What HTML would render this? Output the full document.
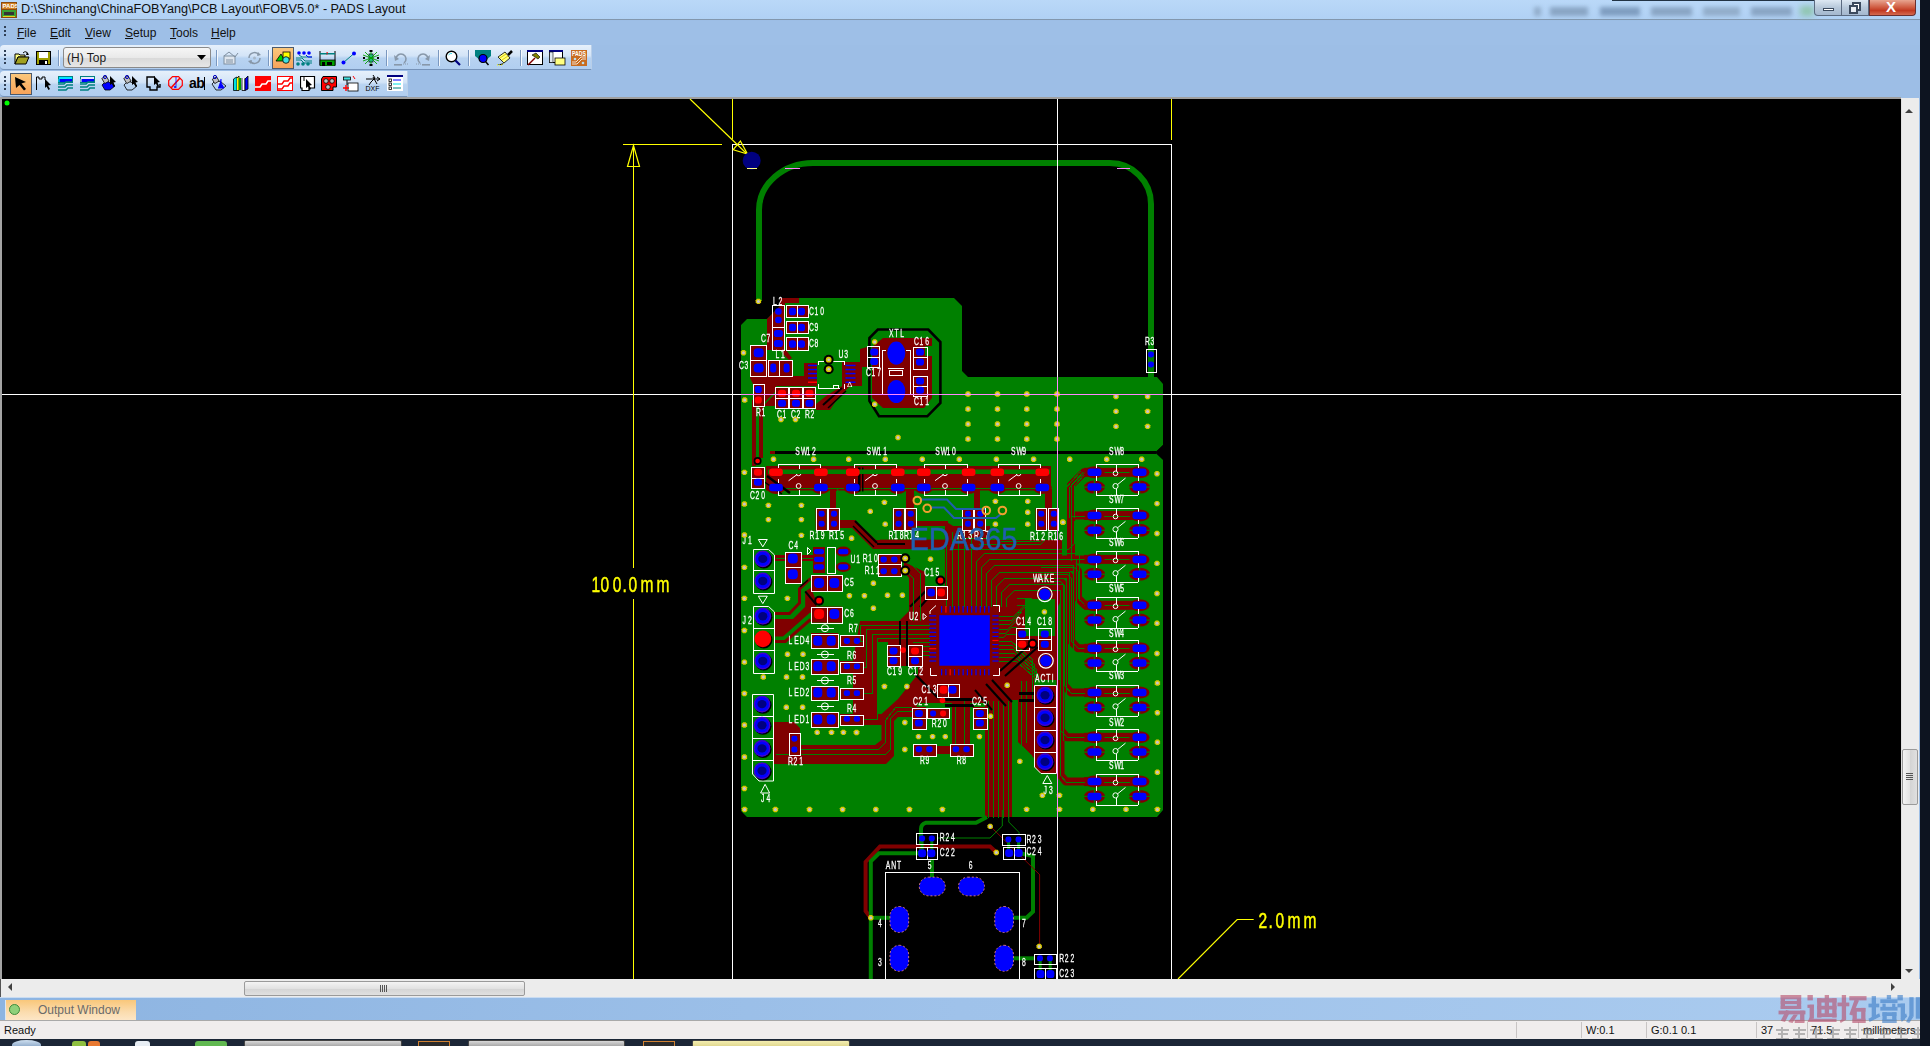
<!DOCTYPE html><html><head><meta charset="utf-8"><title>PADS Layout</title><style>
*{margin:0;padding:0;box-sizing:border-box}
html,body{width:1930px;height:1046px;overflow:hidden;background:#0d1622;font-family:"Liberation Sans",sans-serif}
.abs{position:absolute}
#win{position:absolute;left:0;top:0;width:1920px;height:1039px;background:#9dbee6;overflow:hidden}
#title{position:absolute;left:0;top:0;width:1920px;height:20px;background:linear-gradient(#bad8f8,#b0d1f4);border-bottom:1px solid #8297ad}
#title .t{position:absolute;left:21px;top:2px;font-size:12.65px;color:#111;white-space:nowrap;letter-spacing:0px}
#menu{position:absolute;left:0;top:21px;width:1920px;height:24px;background:#9ebfe7}
#menu span{position:absolute;top:5px;font-size:12px;color:#111}
.tb{position:absolute;border-radius:4px 0 0 4px;background:linear-gradient(#e6f0fb 0%,#d3e4f7 45%,#b8d3f1 55%,#b1cef0 100%);border-bottom:1px solid #7693b9;border-right:1px solid #b9cfe9}
.grip{position:absolute;left:4px;width:2px;background:repeating-linear-gradient(#2f3f55 0 2px,transparent 2px 4px)}
.sep{position:absolute;width:1px;height:18px;background:#8ba7c9;border-right:1px solid #f3f8fd}
.ic{position:absolute;width:16px;height:16px}
#canvas{position:absolute;left:0;top:97px;width:1901px;height:882px;background:#000;border-top:2px solid #a0a0a0;border-left:1px solid #555}
#vscroll{position:absolute;left:1901px;top:98px;width:18px;height:881px;background:#ececec}
#hscroll{position:absolute;left:0;top:979px;width:1901px;height:18px;background:#ececec;border-left:1px solid #555}
#outbar{position:absolute;left:0;top:997px;width:1920px;height:23px;background:linear-gradient(90deg,#8db4e1,#9fc2ea 50%,#aacbef);border-top:1px solid #c9dcf2}
#status{position:absolute;left:0;top:1020px;width:1920px;height:19px;background:#f0eded;border-top:1px solid #a9a9a9}
#status span{position:absolute;top:3px;font-size:11px;color:#111}
#taskbar{position:absolute;left:0;top:1039px;width:1930px;height:7px;background:#1b2636}
</style></head><body><div id="win">
<div id="title">
<svg class="abs" style="left:1px;top:2px" width="16" height="16" viewBox="0 0 16 16"><rect x="0" y="0" width="16" height="16" fill="#8a4a10"/><rect x="1" y="1" width="14" height="6" fill="#d08020"/><text x="1.5" y="6.3" font-size="6" font-family="Liberation Sans" font-weight="bold" fill="#fff">PADS</text><rect x="1" y="8" width="14" height="7" fill="#3aa030"/><rect x="3" y="10" width="10" height="3" fill="#333"/><rect x="2" y="14" width="12" height="1" fill="#e8d020"/></svg>
<div class="t">D:\Shinchang\ChinaFOBYang\PCB Layout\FOBV5.0* - PADS Layout</div>
<div class="abs" style="left:1534px;top:7px;width:7px;height:9px;background:#8aa4c0;filter:blur(2px);opacity:.8"></div>
<div class="abs" style="left:1550px;top:7px;width:38px;height:9px;background:#7f9ab8;filter:blur(2px);opacity:.8"></div>
<div class="abs" style="left:1600px;top:7px;width:40px;height:9px;background:#7290b3;filter:blur(2px);opacity:.8"></div>
<div class="abs" style="left:1651px;top:7px;width:41px;height:9px;background:#7f9ab8;filter:blur(2px);opacity:.8"></div>
<div class="abs" style="left:1703px;top:7px;width:37px;height:9px;background:#8aa4c0;filter:blur(2px);opacity:.8"></div>
<div class="abs" style="left:1751px;top:7px;width:41px;height:9px;background:#7f9ab8;filter:blur(2px);opacity:.8"></div>
<div class="abs" style="left:1800px;top:6px;width:14px;height:10px;background:#7fbf8f;filter:blur(3px);opacity:.7"></div>
<div class="abs" style="left:1612px;top:0;width:300px;height:1px;background:#223344"></div>
<div class="abs" style="left:1814px;top:0;width:28px;height:16px;border:1px solid #5a6a80;border-top:none;border-radius:0 0 0 4px;background:linear-gradient(#dde8f3,#b7c8da 50%,#a4b8cf)"></div>
<div class="abs" style="left:1823px;top:8px;width:11px;height:3px;background:#fff;border:1px solid #3b4a5e"></div>
<div class="abs" style="left:1842px;top:0;width:27px;height:16px;border:1px solid #5a6a80;border-top:none;border-left:none;background:linear-gradient(#dde8f3,#b7c8da 50%,#a4b8cf)"></div>
<div class="abs" style="left:1852px;top:2px;width:9px;height:9px;border:2px solid #3b4a5e;background:#fff"></div>
<div class="abs" style="left:1849px;top:5px;width:9px;height:9px;border:2px solid #3b4a5e;background:#e8eef5"></div>
<div class="abs" style="left:1869px;top:0;width:47px;height:16px;border:1px solid #6a3030;border-top:none;border-radius:0 0 4px 0;background:linear-gradient(#e8a590,#cf5a40 50%,#c23a22 70%,#d46a50)"></div>
<div class="abs" style="left:1886px;top:-2px;font-size:15px;font-weight:bold;color:#fff;font-family:'Liberation Sans'">X</div>
</div>
<div id="menu">
<div class="grip" style="top:5px;height:12px"></div>
<span style="left:17px"><u>F</u>ile</span>
<span style="left:50px"><u>E</u>dit</span>
<span style="left:85px"><u>V</u>iew</span>
<span style="left:125px"><u>S</u>etup</span>
<span style="left:170px"><u>T</u>ools</span>
<span style="left:211px"><u>H</u>elp</span>
</div>
<div class="tb" style="left:0;top:45px;width:592px;height:25px"></div>
<div class="grip" style="top:50px;height:14px"></div>
<div class="tb" style="left:0;top:71px;width:408px;height:26px"></div>
<div class="grip" style="top:76px;height:14px"></div>
<svg class="abs" style="left:14px;top:51px" width="16" height="14" viewBox="0 0 16 14"><path d="M1,3 L5,3 L6,4 L11,4 L11,6 L4,6 L1,13 Z" fill="#ffff80" stroke="#000" stroke-width="1"/><path d="M1,13 L4,6 L15,6 L12,13 Z" fill="#a0a020" stroke="#000" stroke-width="1"/><path d="M9,2 Q12,-1 14,3" fill="none" stroke="#000" stroke-width="1"/><path d="M13,1 L15,4 L12,4Z" fill="#000"/></svg>
<svg class="abs" style="left:36px;top:51px" width="15" height="14" viewBox="0 0 15 14"><rect x="0.5" y="0.5" width="14" height="13" fill="#a0a000" stroke="#000"/><rect x="3" y="1" width="9" height="6" fill="#fff"/><rect x="3" y="9" width="9" height="5" fill="#000"/><rect x="9" y="10" width="2" height="3" fill="#fff"/></svg>
<div class="abs" style="left:58px;top:50px;width:1px;height:16px;background:#7a98c0;box-shadow:1px 0 0 #f4f8fd"></div>
<div class="abs" style="left:63px;top:47px;width:148px;height:21px;border:1px solid #8a8a8a;border-radius:3px;background:linear-gradient(#f6f6f6,#e9e9e9 50%,#d9d9d9 52%,#e6e6e6)"></div>
<div class="abs" style="left:67px;top:51px;font-size:12px;color:#1a1a1a">(H) Top</div>
<svg class="abs" style="left:197px;top:55px" width="10" height="6" viewBox="0 0 10 6"><path d="M0,0 L9,0 L4.5,5 Z" fill="#000"/></svg>
<div class="abs" style="left:216px;top:50px;width:1px;height:16px;background:#7a98c0;box-shadow:1px 0 0 #f4f8fd"></div>
<svg class="abs" style="left:223px;top:51px" width="17" height="14" viewBox="0 0 17 14"><rect x="1" y="5" width="11" height="8" fill="#dfe6ee" stroke="#7f8fa0"/><path d="M1,5 L6,1 L12,6 L15,2" fill="none" stroke="#7f8fa0"/><path d="M3,9 H10 M3,11 H10" stroke="#7f8fa0"/></svg>
<svg class="abs" style="left:247px;top:51px" width="15" height="14" viewBox="0 0 15 14"><path d="M2,7 A5.5,5.5 0 0 1 12,4 M13,7 A5.5,5.5 0 0 1 3,10" fill="none" stroke="#8797a8" stroke-width="1.5"/><path d="M11,1 L14,4 L10,5Z M4,13 L1,10 L5,9Z" fill="#8797a8"/><circle cx="7.5" cy="7" r="1.5" fill="#a8b8c8"/></svg>
<div class="abs" style="left:268px;top:50px;width:1px;height:16px;background:#7a98c0;box-shadow:1px 0 0 #f4f8fd"></div>
<div class="abs" style="left:272px;top:47px;width:22px;height:22px;border:1px solid #4b5a6e;background:linear-gradient(#fbc77b,#f7a35a)"></div>
<svg class="abs" style="left:275px;top:50px" width="17" height="15" viewBox="0 0 17 15"><path d="M1,11 L6,4 L10,11Z" fill="#00d000" stroke="#000" stroke-width="0.8"/><rect x="8" y="2" width="7" height="7" fill="#ffff00" stroke="#000" stroke-width="0.8"/><circle cx="11" cy="10" r="3.3" fill="#40e0e0" stroke="#000" stroke-width="0.8"/></svg>
<svg class="abs" style="left:296px;top:51px" width="17" height="15" viewBox="0 0 17 15"><circle cx="3" cy="2" r="1.8" fill="#0000ff"/><circle cx="8" cy="2" r="1.8" fill="#0000ff"/><circle cx="13" cy="2" r="1.8" fill="#0000ff"/><path d="M0,7 H6 L9,10 H16 M0,9 H5 L8,12 H16 M3,4 L6,6 H16" fill="none" stroke="#008080" stroke-width="1"/><path d="M10,4 L12,6 H16" stroke="#0000ff" fill="none"/><circle cx="2" cy="13" r="1.8" fill="#008080"/><circle cx="7" cy="13" r="1.8" fill="#008080"/><circle cx="12" cy="13" r="1.8" fill="#008080"/></svg>
<svg class="abs" style="left:319px;top:50px" width="17" height="16" viewBox="0 0 17 16"><path d="M1,1 V15 M16,1 V15" stroke="#000"/><rect x="1" y="3" width="15" height="1.5" fill="#008080"/><path d="M7,2 L9,4 L7,5 L9,2Z" fill="#f00"/><rect x="1" y="10" width="15" height="6" fill="#00a000" stroke="#000" stroke-width="0.8"/><rect x="3" y="12" width="3" height="4" fill="#000"/><rect x="8" y="12" width="5" height="3" fill="#000"/></svg>
<svg class="abs" style="left:341px;top:51px" width="16" height="14" viewBox="0 0 16 14"><path d="M2.5,11.5 L13,2.5" stroke="#008080" stroke-width="1"/><circle cx="2.5" cy="11.5" r="2" fill="#0000ff"/><circle cx="13" cy="2.5" r="2" fill="#0000ff"/></svg>
<svg class="abs" style="left:363px;top:50px" width="16" height="16" viewBox="0 0 16 16"><rect x="6" y="4" width="4" height="8" fill="#40d0d0" stroke="#000" stroke-width="0.7"/><path d="M8,0 V16 M0,5 L16,11 M0,11 L16,5 M2,2 L14,14 M14,2 L2,14" stroke="#00a000" stroke-width="0.9"/><rect x="6.5" y="0" width="3" height="2" fill="#000"/><rect x="6.5" y="14" width="3" height="2" fill="#000"/><rect x="0" y="7" width="2" height="2" fill="#000"/><rect x="14" y="7" width="2" height="2" fill="#000"/></svg>
<div class="abs" style="left:386px;top:50px;width:1px;height:16px;background:#7a98c0;box-shadow:1px 0 0 #f4f8fd"></div>
<svg class="abs" style="left:393px;top:51px" width="16" height="15" viewBox="0 0 16 15"><path d="M3,8 A5,5 0 1 1 11,12" fill="none" stroke="#8898aa" stroke-width="1.6"/><path d="M1,4 L2,10 L6,8Z" fill="#8898aa"/><rect x="1" y="13" width="8" height="1.6" fill="#8898aa"/><path d="M10,13 h1 m1,0 h1 m1,0 h1" stroke="#8898aa"/></svg>
<svg class="abs" style="left:415px;top:51px" width="16" height="15" viewBox="0 0 16 15"><path d="M13,8 A5,5 0 1 0 5,12" fill="none" stroke="#8898aa" stroke-width="1.6"/><path d="M15,4 L14,10 L10,8Z" fill="#8898aa"/><rect x="7" y="13" width="8" height="1.6" fill="#8898aa"/><path d="M1,13 h1 m1,0 h1 m1,0 h1" stroke="#8898aa"/></svg>
<div class="abs" style="left:438px;top:50px;width:1px;height:16px;background:#7a98c0;box-shadow:1px 0 0 #f4f8fd"></div>
<svg class="abs" style="left:445px;top:50px" width="16" height="16" viewBox="0 0 16 16"><circle cx="6.5" cy="6.5" r="5.3" fill="#fff" stroke="#000" stroke-width="1.4"/><path d="M3.5,5 Q5,3 7,3.5" stroke="#40e0f0" fill="none"/><path d="M10.5,10.5 L15,15" stroke="#000080" stroke-width="2.2"/></svg>
<div class="abs" style="left:468px;top:50px;width:1px;height:16px;background:#7a98c0;box-shadow:1px 0 0 #f4f8fd"></div>
<svg class="abs" style="left:475px;top:50px" width="16" height="16" viewBox="0 0 16 16"><path d="M0,0 H16 V6 L11,10 H5 L0,6Z" fill="#008080"/><circle cx="8" cy="8.5" r="4" fill="#0000ff" stroke="#000" stroke-width="1.2"/><path d="M10.5,11.5 L13.5,15" stroke="#000" stroke-width="1.5"/></svg>
<svg class="abs" style="left:497px;top:50px" width="17" height="16" viewBox="0 0 17 16"><path d="M1,7 L8,2 L13,8 L7,13Z" fill="#ffff80" stroke="#000" stroke-width="0.8"/><path d="M3,8 L9,4 M5,10 L11,6" stroke="#e0d000"/><path d="M11,5 L15,1" stroke="#000" stroke-width="2.5"/><path d="M0,15 H5 L7,13" stroke="#ffff00" stroke-dasharray="1 1"/></svg>
<div class="abs" style="left:520px;top:50px;width:1px;height:16px;background:#7a98c0;box-shadow:1px 0 0 #f4f8fd"></div>
<svg class="abs" style="left:527px;top:50px" width="16" height="16" viewBox="0 0 16 16"><rect x="0.5" y="0.5" width="15" height="14" fill="#fff" stroke="#000"/><rect x="0" y="0" width="16" height="2" fill="#000080"/><path d="M1,15 L8,8" stroke="#800000" stroke-width="1.5"/><path d="M5,5 L9,3 L13,7 L11,9Z" fill="#808000" stroke="#000" stroke-width="0.6"/></svg>
<svg class="abs" style="left:549px;top:50px" width="17" height="16" viewBox="0 0 17 16"><rect x="0.5" y="0.5" width="13" height="12" fill="#fff" stroke="#000"/><rect x="0" y="0" width="14" height="2" fill="#000080"/><rect x="0.5" y="2" width="3.5" height="10.5" fill="#dfe8f0" stroke="#000" stroke-width="0.6"/><rect x="6" y="8" width="10" height="7" fill="#ffff80" stroke="#000" stroke-width="0.8"/></svg>
<svg class="abs" style="left:571px;top:50px" width="17" height="16" viewBox="0 0 17 16"><rect x="0" y="0" width="16" height="16" fill="#c86c20"/><text x="1" y="6.3" font-size="6.5" font-weight="bold" fill="#fff" font-family="Liberation Sans" textLength="14" lengthAdjust="spacingAndGlyphs">PADS</text><path d="M1,14 H6 L11,9 H15 M1,12 H5 L10,7 H15" stroke="#fff" stroke-width="0.8" fill="none"/><circle cx="4" cy="9" r="1.3" fill="#bde"/><circle cx="12" cy="13" r="1.3" fill="#bde"/></svg>
<div class="abs" style="left:10px;top:73px;width:22px;height:22px;border:1px solid #4b5a6e;background:linear-gradient(#fbc77b,#f7a35a)"></div>
<svg class="abs" style="left:14px;top:76px" width="15" height="16" viewBox="0 0 15 16"><path d="M1,1 L12,6 L7.5,7.5 L12,13 L10,14.5 L5.5,9 L2,12Z" fill="#000"/></svg>
<svg class="abs" style="left:36px;top:76px" width="16" height="15" viewBox="0 0 16 15"><path d="M0.5,14 V1 H3 V3 H6 V1 H9 V4" fill="none" stroke="#000"/><path d="M9,3 L15,9 L12,9.5 L14,13 L12.5,14 L10.5,10.5 L9,12Z" fill="#000"/></svg>
<svg class="abs" style="left:58px;top:76px" width="15" height="15" viewBox="0 0 15 15"><rect x="0.5" y="0.5" width="14" height="6" fill="#0000ff" stroke="#008080"/><rect x="1" y="1" width="13" height="2" fill="#00ffff" opacity="0.9"/><path d="M1,3 V6" stroke="#00ffff"/><path d="M0,8 H6 L8,6 H15 M0,11 H7 L9,9 H15 M0,14 H8 L10,12 H15" stroke="#008080" stroke-width="1.6" fill="none"/></svg>
<svg class="abs" style="left:80px;top:76px" width="15" height="15" viewBox="0 0 15 15"><rect x="0.5" y="0.5" width="14" height="6" fill="#0000ff" stroke="#008080"/><rect x="1" y="1" width="13" height="2" fill="#ffffff" opacity="0.9"/><path d="M1,3 V6" stroke="#ffffff"/><path d="M0,8 H6 L8,6 H15 M0,11 H7 L9,9 H15 M0,14 H8 L10,12 H15" stroke="#008080" stroke-width="1.6" fill="none"/></svg>
<svg class="abs" style="left:101px;top:75px" width="16" height="16" viewBox="0 0 16 16"><path d="M1,10 L5,6 L10,8 L14,11 L9,15 H4Z" fill="#0000ff" stroke="#000" stroke-width="0.8"/><rect x="2" y="2" width="5" height="6" fill="#c0c0c0" stroke="#000" stroke-width="0.7" transform="rotate(-30 4 5)"/><circle cx="4" cy="2" r="1.6" fill="none" stroke="#0000c0"/><path d="M9,1 L15,7 L12.5,7.5 L14,11 L12.5,12 L11,8.5 L9,10Z" fill="#000"/></svg>
<svg class="abs" style="left:123px;top:75px" width="16" height="16" viewBox="0 0 16 16"><path d="M1,10 L5,6 L10,8 L14,11 L9,15 H4Z" fill="none" stroke="#000" stroke-width="0.8"/><rect x="2" y="2" width="5" height="6" fill="#c0c0c0" stroke="#000" stroke-width="0.7" transform="rotate(-30 4 5)"/><circle cx="4" cy="2" r="1.6" fill="none" stroke="#0000c0"/><path d="M9,1 L15,7 L12.5,7.5 L14,11 L12.5,12 L11,8.5 L9,10Z" fill="#000"/></svg>
<svg class="abs" style="left:146px;top:76px" width="16" height="15" viewBox="0 0 16 15"><path d="M9,1 H1 V11 H4 V14 H11 V11 H14 V8" fill="none" stroke="#000" stroke-width="1.4"/><path d="M8,0 L14,6 L11.5,6.5 L13,10 L11.5,11 L10,7.5 L8,9Z" fill="#000"/></svg>
<svg class="abs" style="left:168px;top:76px" width="15" height="14" viewBox="0 0 15 14"><path d="M4.5,0.7 H10.5 L14.3,4.5 V9.5 L10.5,13.3 H4.5 L0.7,9.5 V4.5Z" fill="none" stroke="#f00" stroke-width="1.2"/><path d="M3,12 L12,2" stroke="#f00" stroke-width="1.6"/><path d="M8,1 V12" stroke="#0000ff" stroke-width="0.8"/><circle cx="7" cy="11" r="1" fill="#00f"/></svg>
<div class="abs" style="left:189px;top:75px;font-size:14px;font-weight:bold;color:#000;letter-spacing:-0.5px">ab</div>
<div class="abs" style="left:204px;top:77px;width:1px;height:13px;background:#000"></div>
<svg class="abs" style="left:211px;top:75px" width="16" height="16" viewBox="0 0 16 16"><path d="M1,9 L5,5 L10,7 L15,11 L10,15 H5Z" fill="none" stroke="#000" stroke-width="0.8"/><rect x="2" y="3" width="5" height="5" fill="#c0c0c0" stroke="#000" stroke-width="0.7" transform="rotate(-30 4 5)"/><path d="M7,13 H13 L10,8 V4" fill="#0000ff" stroke="#0000ff"/><circle cx="4" cy="2" r="1.6" fill="none" stroke="#0000c0"/></svg>
<svg class="abs" style="left:233px;top:75px" width="16" height="16" viewBox="0 0 16 16"><path d="M0.5,4 V15.5 H4 V2 L2,3Z" fill="#00e0e0" stroke="#000" stroke-width="0.8"/><path d="M4,3 L6,1 V15.5 H4" fill="#ffff00" stroke="#000" stroke-width="0.8"/><rect x="6" y="3" width="2" height="12" fill="#00a000"/><path d="M9,3 V15.5 H12 V3" fill="#fff" stroke="#000" stroke-width="0.8"/><path d="M12,4 L15,1 V14 L12,15.5Z" fill="#0000ff" stroke="#000" stroke-width="0.8"/></svg>
<svg class="abs" style="left:255px;top:76px" width="16" height="16" viewBox="0 0 16 16"><rect x="0" y="0" width="16" height="15" fill="#ff0000"/><path d="M0,11 L5,11 L7,8 L11,8 L13,5 L16,5" stroke="#fff" stroke-width="1.6" fill="none"/></svg>
<svg class="abs" style="left:277px;top:76px" width="16" height="16" viewBox="0 0 16 16"><rect x="0.5" y="0.5" width="15" height="14" fill="#fff" stroke="#ff0000" stroke-width="1"/><path d="M1,8 L5,8 L7,5 L11,5 L13,2 L15,2 M1,13 L5,13 L7,10 L11,10 L13,7 L15,7" stroke="#ff0000" stroke-width="1.4" fill="none"/></svg>
<svg class="abs" style="left:300px;top:76px" width="16" height="15" viewBox="0 0 16 15"><path d="M0.5,0.5 H14.5 V12 H9 V14.5 H2 V12 H0.5Z" fill="#fff" stroke="#000" stroke-width="1.2"/><path d="M4,1 V5" stroke="#000"/><path d="M6,3 L12,9 L9.5,9.5 L11,13 L9.5,14 L8,10.5 L6,12Z" fill="#000"/></svg>
<svg class="abs" style="left:321px;top:76px" width="16" height="15" viewBox="0 0 16 15"><path d="M2,0.5 H15.5 V11 H12 V14.5 H0.5 V3Z" fill="#ff0000" stroke="#000" stroke-width="1"/><circle cx="5" cy="5" r="2.3" fill="#c0c0c0" stroke="#000" stroke-width="0.8"/><circle cx="11" cy="5" r="2.3" fill="#c0c0c0" stroke="#000" stroke-width="0.8"/><circle cx="7" cy="11" r="2.3" fill="#c0c0c0" stroke="#000" stroke-width="0.8"/></svg>
<svg class="abs" style="left:343px;top:75px" width="16" height="17" viewBox="0 0 16 17"><rect x="0.5" y="2" width="7" height="3" fill="#40e0e0" stroke="#000" stroke-width="0.8"/><path d="M4,5 V10" stroke="#000"/><rect x="5" y="8" width="10" height="8" fill="#fff" stroke="#000" stroke-width="0.8"/><path d="M0,13 H6 M3,10 V16" stroke="#f00" stroke-width="1.4"/><path d="M10,1 L12,4" stroke="#f00"/></svg>
<svg class="abs" style="left:365px;top:75px" width="17" height="17" viewBox="0 0 17 17"><path d="M1,4 H15 M12,2 L15,4 L12,6 M8,0 L10,3 L6,7 L4,10 M8,2 L12,9" fill="none" stroke="#000" stroke-width="1"/><text x="0.5" y="16" font-size="7" font-family="Liberation Sans" fill="#000">DXF</text></svg>
<svg class="abs" style="left:387px;top:75px" width="16" height="16" viewBox="0 0 16 16"><rect x="0" y="1" width="16" height="15" fill="#fff"/><rect x="0" y="0" width="16" height="2" fill="#000080"/><rect x="2" y="4" width="2.5" height="2.5" fill="none" stroke="#000" stroke-width="0.8"/><rect x="2" y="8" width="2.5" height="2.5" fill="none" stroke="#000" stroke-width="0.8"/><rect x="2" y="12" width="2.5" height="2.5" fill="none" stroke="#000" stroke-width="0.8"/><path d="M6,5 H14" stroke="#0000ff"/><path d="M6,9 H14" stroke="#00e0e0"/><path d="M6,13 H14" stroke="#008080"/></svg>
<div id="canvas"></div>
<svg class="abs" style="left:0;top:0;opacity:0.999" width="1920" height="1039" viewBox="0 0 1920 1039" font-family="Liberation Sans, sans-serif"><defs><clipPath id="cv"><rect x="2" y="99" width="1899" height="880"/></clipPath></defs><g clip-path="url(#cv)"><path d="M759,301 L759,210 A54,47 0 0 1 813,163 L1110,163 A41,41 0 0 1 1151,204 L1151,378" fill="none" stroke="#008000" stroke-width="6" />
<polygon points="741,325 747,319 767,319 780,306 780,298 954,298 962,306 962,371 968,377 1157,377 1163,384 1163,445 1156,452 1163,458 1163,810 1157,817 747,817 741,811" fill="#008000"/>
<rect x="770" y="451" width="386" height="3" fill="#000" />
<rect x="770" y="451" width="5" height="3" fill="#800000" />
<polygon points="1155,452.5 1163,445 1163,460" fill="#000"/>
<rect x="766" y="466" width="285" height="24.5" fill="#800000" />
<ellipse cx="776" cy="487.5" rx="9.5" ry="6.5" fill="#800000" />
<ellipse cx="820.9" cy="487.5" rx="9.5" ry="6.5" fill="#800000" />
<ellipse cx="852.8" cy="487.5" rx="9.5" ry="6.5" fill="#800000" />
<ellipse cx="897.8" cy="487.5" rx="9.5" ry="6.5" fill="#800000" />
<ellipse cx="923.8" cy="487.5" rx="9.5" ry="6.5" fill="#800000" />
<ellipse cx="968.6" cy="487.5" rx="9.5" ry="6.5" fill="#800000" />
<ellipse cx="997.3" cy="487.5" rx="9.5" ry="6.5" fill="#800000" />
<ellipse cx="1042.3" cy="487.5" rx="9.5" ry="6.5" fill="#800000" />
<polygon points="767,319 780,306 780,298 799,298 799,303 785,303 785,350 767,350" fill="#800000"/>
<rect x="786" y="305" width="22" height="12" fill="#800000" />
<rect x="786" y="321" width="22" height="12" fill="#800000" />
<rect x="786" y="337" width="22" height="13" fill="#800000" />
<polygon points="750,345 766,345 766,360 792,360 792,376 804,376 804,363 817,363 817,386 776,386 776,406 753,406 753,384 750,378" fill="#800000"/>
<polyline points="764,404 776,392" fill="none" stroke="#008000" stroke-width="1.5" />
<polygon points="783,350 786,350 792,358 789,360 783,354" fill="#800000"/>
<polygon points="842,362 860,362 860,349 867,347 867,367 862,367 862,386 850,386 838,398 830,410 816,410 816,404 826,396 842,386" fill="#800000"/>
<polygon points="883,338 932,338 932,346 925,346 925,356 932,356 932,398 924,408 883,408 872,398 872,347" fill="#800000"/>
<polygon points="945,526 990,526 990,540 1062,540 1062,600 1058,606 1058,680 1034,680 1034,758 1018,742 1018,700 1012,700 1012,817 985,817 985,703 970,703 970,744 952,744 952,703 918,703 912,717 898,717 894,721 894,756 886,764 773,764 773,722 794,722 800,728 800,745 875,745 881.5,740 881.5,725 862,725 853,718 853,660 860,621 899,621 909,611 909,578 904,572 904,562 925,572 925,599 945,599" fill="#800000"/>
<rect x="911" y="521" width="37" height="5" fill="#800000" />
<polygon points="945,521 958,529 958,534 945,526" fill="#800000"/>
<rect x="880" y="539.6" width="66" height="9.4" fill="#800000" />
<rect x="1025" y="599" width="30" height="37" fill="#008000" />
<polygon points="877.5,642 888,642 888,666 918,666 918,674 898,699 881.5,714 877.5,714" fill="#008000"/>
<rect x="830" y="489" width="7" height="20" fill="#800000" />
<rect x="906" y="489" width="8" height="32" fill="#800000" />
<rect x="974" y="489" width="6" height="40" fill="#800000" />
<rect x="1045" y="489" width="7" height="40" fill="#800000" />
<polygon points="838,520 855,520 876,540 880,540 880,549 873,549 852,528 838,528" fill="#800000"/>
<polyline points="1071,560 1071,485 1084,472.3 1094,472.3" fill="none" stroke="#800000" stroke-width="8" stroke-linejoin="round"/>
<polyline points="1071,515.5 1094,515.5" fill="none" stroke="#800000" stroke-width="8" stroke-linejoin="round"/>
<polyline points="1040,559.4 1094,559.4" fill="none" stroke="#800000" stroke-width="8" stroke-linejoin="round"/>
<polyline points="1040,567 1074,567 1078,571 1078,598 1085,605.3 1094,605.3" fill="none" stroke="#800000" stroke-width="8" stroke-linejoin="round"/>
<polyline points="1040,574 1067,574 1071,578 1071,641 1078,648.3 1094,648.3" fill="none" stroke="#800000" stroke-width="8" stroke-linejoin="round"/>
<polyline points="1040,581 1060,581 1064,585 1064,685 1071,692.6 1094,692.6" fill="none" stroke="#800000" stroke-width="8" stroke-linejoin="round"/>
<polyline points="1060.5,680 1060.5,730 1067,737.3 1094,737.3" fill="none" stroke="#800000" stroke-width="8" stroke-linejoin="round"/>
<polyline points="1060.5,700 1060.5,775 1066,781.6 1094,781.6" fill="none" stroke="#800000" stroke-width="8" stroke-linejoin="round"/>
<polyline points="1071.5,560.5 1071.5,485.5 1084.5,472.5 1094.5,472.5" stroke="#008000" stroke-width="1" fill="none" shape-rendering="crispEdges"/>
<polyline points="1071.5,516.5 1094.5,516.5" stroke="#008000" stroke-width="1" fill="none" shape-rendering="crispEdges"/>
<polyline points="1040.5,559.5 1094.5,559.5" stroke="#008000" stroke-width="1" fill="none" shape-rendering="crispEdges"/>
<polyline points="1040.5,567.5 1074.5,567.5 1078.5,571.5 1078.5,598.5 1085.5,605.5 1094.5,605.5" stroke="#008000" stroke-width="1" fill="none" shape-rendering="crispEdges"/>
<polyline points="1040.5,574.5 1067.5,574.5 1071.5,578.5 1071.5,641.5 1078.5,648.5 1094.5,648.5" stroke="#008000" stroke-width="1" fill="none" shape-rendering="crispEdges"/>
<polyline points="1040.5,581.5 1060.5,581.5 1064.5,585.5 1064.5,685.5 1071.5,693.5 1094.5,693.5" stroke="#008000" stroke-width="1" fill="none" shape-rendering="crispEdges"/>
<polyline points="1060.5,680.5 1060.5,730.5 1067.5,737.5 1094.5,737.5" stroke="#008000" stroke-width="1" fill="none" shape-rendering="crispEdges"/>
<polyline points="1060.5,700.5 1060.5,775.5 1066.5,782.5 1094.5,782.5" stroke="#008000" stroke-width="1" fill="none" shape-rendering="crispEdges"/>
<rect x="775" y="555" width="44" height="6" fill="#800000" />
<polyline points="810.5,578.5 799.5,589 799.5,603 789.5,613.5 774.6,613.5" fill="none" stroke="#800000" stroke-width="3" />
<polygon points="774.6,619 793,619 805.2,606.7 805.2,591.4 811,587.6 817.4,604.4 811.3,612.8 809.8,612.8 783,636.5 774.6,636.5" fill="#800000"/>
<polyline points="774.6,641.5 785.3,641.5 810.5,619.5" fill="none" stroke="#800000" stroke-width="3" />
<rect x="811" y="633" width="27" height="15" fill="#800000" />
<rect x="811" y="659" width="27" height="15" fill="#800000" />
<rect x="811" y="686" width="27" height="15" fill="#800000" />
<rect x="811" y="712" width="27" height="15" fill="#800000" />
<rect x="840" y="635" width="23" height="11" fill="#800000" />
<rect x="840" y="661" width="23" height="12" fill="#800000" />
<rect x="840" y="688" width="23" height="11" fill="#800000" />
<rect x="840" y="714" width="23" height="11" fill="#800000" />
<rect x="775" y="387" width="41" height="21" fill="#800000" />
<rect x="985" y="700" width="27" height="117" fill="#800000" />
<rect x="935" y="746" width="16" height="8" fill="#800000" />
<rect x="752" y="400" width="4" height="66" fill="#800000" />
<rect x="759" y="400" width="4" height="58" fill="#800000" />
<polyline points="946.5,606.5 946.5,531.5" stroke="#008000" stroke-width="1" fill="none" shape-rendering="crispEdges"/>
<polyline points="952.5,606.5 952.5,531.5" stroke="#008000" stroke-width="1" fill="none" shape-rendering="crispEdges"/>
<polyline points="958.5,606.5 958.5,531.5" stroke="#008000" stroke-width="1" fill="none" shape-rendering="crispEdges"/>
<polyline points="964.5,606.5 964.5,531.5" stroke="#008000" stroke-width="1" fill="none" shape-rendering="crispEdges"/>
<polyline points="971.5,606.5 971.5,531.5" stroke="#008000" stroke-width="1" fill="none" shape-rendering="crispEdges"/>
<polyline points="976.5,606.5 976.5,561.5 984.5,553.5 1079.5,553.5 1079.5,600.5" stroke="#008000" stroke-width="1" fill="none" shape-rendering="crispEdges"/>
<polyline points="981.5,606.5 981.5,567.5 989.5,559.5 1076.5,559.5 1076.5,628.5" stroke="#008000" stroke-width="1" fill="none" shape-rendering="crispEdges"/>
<polyline points="986.5,606.5 986.5,573.5 994.5,565.5 1073.5,565.5 1073.5,656.5" stroke="#008000" stroke-width="1" fill="none" shape-rendering="crispEdges"/>
<polyline points="991.5,606.5 991.5,580.5 999.5,572.5 1069.5,572.5 1069.5,684.5" stroke="#008000" stroke-width="1" fill="none" shape-rendering="crispEdges"/>
<polyline points="996.5,606.5 996.5,586.5 1004.5,578.5 1066.5,578.5 1066.5,712.5" stroke="#008000" stroke-width="1" fill="none" shape-rendering="crispEdges"/>
<polyline points="1001.5,606.5 1001.5,592.5 1009.5,584.5 1063.5,584.5 1063.5,740.5" stroke="#008000" stroke-width="1" fill="none" shape-rendering="crispEdges"/>
<polyline points="1006.5,606.5 1006.5,598.5 1014.5,590.5 1060.5,590.5 1060.5,768.5" stroke="#008000" stroke-width="1" fill="none" shape-rendering="crispEdges"/>
<polyline points="998.5,616.5 1013.5,616.5 1031.5,598.5 1016.5,598.5" stroke="#008000" stroke-width="1" fill="none" shape-rendering="crispEdges"/>
<polyline points="998.5,620.5 1011.5,620.5 1026.5,605.5 1016.5,605.5" stroke="#008000" stroke-width="1" fill="none" shape-rendering="crispEdges"/>
<polyline points="998.5,624.5 1009.5,624.5 1021.5,612.5 1016.5,612.5" stroke="#008000" stroke-width="1" fill="none" shape-rendering="crispEdges"/>
<polyline points="998.5,629.5 1007.5,629.5 1016.5,620.5 1016.5,620.5" stroke="#008000" stroke-width="1" fill="none" shape-rendering="crispEdges"/>
<polyline points="998.5,633.5 1005.5,633.5 1011.5,627.5 1016.5,627.5" stroke="#008000" stroke-width="1" fill="none" shape-rendering="crispEdges"/>
<polyline points="998.5,637.5 1003.5,637.5 1006.5,634.5 1016.5,634.5" stroke="#008000" stroke-width="1" fill="none" shape-rendering="crispEdges"/>
<polyline points="998.5,641.5 1011.5,641.5 1032.5,659.5 1032.5,700.5" stroke="#008000" stroke-width="1" fill="none" shape-rendering="crispEdges"/>
<polyline points="998.5,645.5 1012.5,645.5 1034.5,664.5 1034.5,700.5" stroke="#008000" stroke-width="1" fill="none" shape-rendering="crispEdges"/>
<polyline points="998.5,649.5 1013.5,649.5 1036.5,669.5 1036.5,700.5" stroke="#008000" stroke-width="1" fill="none" shape-rendering="crispEdges"/>
<polyline points="998.5,653.5 1014.5,653.5 1038.5,674.5 1038.5,700.5" stroke="#008000" stroke-width="1" fill="none" shape-rendering="crispEdges"/>
<polyline points="998.5,657.5 1015.5,657.5 1040.5,679.5 1040.5,700.5" stroke="#008000" stroke-width="1" fill="none" shape-rendering="crispEdges"/>
<polyline points="998.5,661.5 1016.5,661.5 1042.5,684.5 1042.5,700.5" stroke="#008000" stroke-width="1" fill="none" shape-rendering="crispEdges"/>
<polyline points="929.5,625.5 860.5,625.5 860.5,641.5 863.5,641.5" stroke="#008000" stroke-width="1" fill="none" shape-rendering="crispEdges"/>
<polyline points="929.5,629.5 866.5,629.5 866.5,667.5 863.5,667.5" stroke="#008000" stroke-width="1" fill="none" shape-rendering="crispEdges"/>
<polyline points="929.5,634.5 872.5,634.5 872.5,693.5 863.5,693.5" stroke="#008000" stroke-width="1" fill="none" shape-rendering="crispEdges"/>
<polyline points="929.5,638.5 877.5,638.5 877.5,719.5 863.5,719.5" stroke="#008000" stroke-width="1" fill="none" shape-rendering="crispEdges"/>
<polyline points="929.5,642.5 912.5,642.5" stroke="#008000" stroke-width="1" fill="none" shape-rendering="crispEdges"/>
<polyline points="929.5,646.5 912.5,646.5" stroke="#008000" stroke-width="1" fill="none" shape-rendering="crispEdges"/>
<polyline points="929.5,651.5 912.5,651.5" stroke="#008000" stroke-width="1" fill="none" shape-rendering="crispEdges"/>
<polyline points="929.5,655.5 912.5,655.5" stroke="#008000" stroke-width="1" fill="none" shape-rendering="crispEdges"/>
<polyline points="978.5,544.5 1040.5,544.5 1047.5,537.5 1047.5,530.5" stroke="#008000" stroke-width="1" fill="none" shape-rendering="crispEdges"/>
<polyline points="952.5,549.5 1068.5,549.5 1074.5,543.5 1074.5,520.5" stroke="#008000" stroke-width="1" fill="none" shape-rendering="crispEdges"/>
<polyline points="960.5,538.5 988.5,538.5" stroke="#008000" stroke-width="1" fill="none" shape-rendering="crispEdges"/>
<polyline points="1000.5,541.5 1040.5,541.5" stroke="#008000" stroke-width="1" fill="none" shape-rendering="crispEdges"/>
<polyline points="783.5,488.5 843.5,488.5" stroke="#008000" stroke-width="1" fill="none" shape-rendering="crispEdges"/>
<polyline points="860.5,488.5 917.5,488.5" stroke="#008000" stroke-width="1" fill="none" shape-rendering="crispEdges"/>
<polyline points="930.5,488.5 990.5,488.5" stroke="#008000" stroke-width="1" fill="none" shape-rendering="crispEdges"/>
<polyline points="1004.5,488.5 1035.5,488.5" stroke="#008000" stroke-width="1" fill="none" shape-rendering="crispEdges"/>
<polyline points="837.5,488.5 836.5,494.5 836.5,508.5" stroke="#008000" stroke-width="1" fill="none" shape-rendering="crispEdges"/>
<polyline points="775.5,754.5 885.5,754.5 890.5,749.5 890.5,718.5 897.5,711.5 912.5,711.5" stroke="#008000" stroke-width="1" fill="none" shape-rendering="crispEdges"/>
<polyline points="800.5,749.5 878.5,749.5 885.5,742.5 885.5,720.5 895.5,707.5 915.5,707.5" stroke="#008000" stroke-width="1" fill="none" shape-rendering="crispEdges"/>
<polyline points="988.5,700.5 988.5,817.5" stroke="#008000" stroke-width="1" fill="none" shape-rendering="crispEdges"/>
<polyline points="993.5,700.5 993.5,817.5" stroke="#008000" stroke-width="1" fill="none" shape-rendering="crispEdges"/>
<polyline points="998.5,700.5 998.5,817.5" stroke="#008000" stroke-width="1" fill="none" shape-rendering="crispEdges"/>
<polyline points="1003.5,700.5 1003.5,817.5" stroke="#008000" stroke-width="1" fill="none" shape-rendering="crispEdges"/>
<polyline points="1008.5,700.5 1008.5,817.5" stroke="#008000" stroke-width="1" fill="none" shape-rendering="crispEdges"/>
<polyline points="955.5,703.5 955.5,744.5" stroke="#008000" stroke-width="1" fill="none" shape-rendering="crispEdges"/>
<polyline points="964.5,697.5 964.5,744.5" stroke="#008000" stroke-width="1" fill="none" shape-rendering="crispEdges"/>
<polyline points="1021.5,680.5 1021.5,745.5 1032.5,756.5" stroke="#008000" stroke-width="1" fill="none" shape-rendering="crispEdges"/>
<polyline points="1026.5,680.5 1026.5,742.5" stroke="#008000" stroke-width="1" fill="none" shape-rendering="crispEdges"/>
<polyline points="1064.5,517.5 1064.5,489.5 1080.5,471.5" stroke="#008000" stroke-width="1" fill="none" shape-rendering="crispEdges"/>
<polyline points="1069.5,517.5 1069.5,487.5 1082.5,472.5" stroke="#008000" stroke-width="1" fill="none" shape-rendering="crispEdges"/>
<polyline points="1074.5,517.5 1074.5,485.5 1084.5,474.5" stroke="#008000" stroke-width="1" fill="none" shape-rendering="crispEdges"/>
<polyline points="775.5,558.5 819.5,558.5" stroke="#008000" stroke-width="1" fill="none" shape-rendering="crispEdges"/>
<line x1="1034" y1="641" x2="1000" y2="671" stroke="#000" stroke-width="2.2"/>
<line x1="1038" y1="647" x2="1005" y2="676" stroke="#000" stroke-width="2.2"/>
<line x1="992" y1="680" x2="1012" y2="702" stroke="#000" stroke-width="2.2"/>
<line x1="986" y1="684" x2="1006" y2="706" stroke="#000" stroke-width="2.2"/>
<line x1="975" y1="690" x2="992" y2="710" stroke="#000" stroke-width="2"/>
<line x1="914" y1="673" x2="938" y2="698" stroke="#000" stroke-width="2.5"/>
<line x1="855" y1="521" x2="877" y2="543" stroke="#000" stroke-width="2.2"/>
<line x1="853" y1="526" x2="874" y2="547" stroke="#000" stroke-width="1.5"/>
<rect x="877" y="543" width="28" height="2" fill="#000" shape-rendering="crispEdges"/>
<line x1="926.4" y1="590.4" x2="910" y2="606.7" stroke="#000" stroke-width="2.2"/>
<line x1="929" y1="597" x2="920" y2="607" stroke="#000" stroke-width="2.2"/>
<polyline points="906.5,559.5 920.5,573.5 920.5,620.5" stroke="#008000" stroke-width="1" fill="none" shape-rendering="crispEdges"/>
<polyline points="906.5,571.5 913.5,578.5 913.5,620.5" stroke="#008000" stroke-width="1" fill="none" shape-rendering="crispEdges"/>
<rect x="899" y="621" width="2" height="45" fill="#000" shape-rendering="crispEdges"/>
<rect x="906" y="621" width="2" height="45" fill="#000" shape-rendering="crispEdges"/>
<line x1="767" y1="476" x2="790" y2="493" stroke="#000" stroke-width="2.5"/>
<line x1="763" y1="481" x2="782" y2="494" stroke="#000" stroke-width="1.5"/>
<rect x="858" y="467.5" width="2.5" height="24" fill="#000" />
<rect x="862" y="467.5" width="1.5" height="24" fill="#000" />
<line x1="823" y1="405" x2="842" y2="388" stroke="#000" stroke-width="2"/>
<line x1="828" y1="408" x2="846" y2="391" stroke="#000" stroke-width="1.5"/>
<rect x="945" y="698" width="29" height="2.5" fill="#000" shape-rendering="crispEdges"/>
<rect x="945" y="704" width="29" height="2.5" fill="#000" shape-rendering="crispEdges"/>
<rect x="1019" y="692" width="15" height="2.5" fill="#000" shape-rendering="crispEdges"/>
<rect x="1019" y="699" width="15" height="2.5" fill="#000" shape-rendering="crispEdges"/>
<line x1="805.2" y1="591.4" x2="816.6" y2="605.2" stroke="#000" stroke-width="2"/>
<line x1="800" y1="587" x2="808" y2="580" stroke="#000" stroke-width="1.5"/>
<rect x="772.5" y="305.5" width="12" height="22" fill="none" stroke="#ffffff" stroke-width="1"/>
<rect x="775.15" y="308.15" width="6.5" height="6.5" rx="2.6" fill="#0000ff"/>
<rect x="775.15" y="316.65" width="6.5" height="6.5" rx="2.6" fill="#0000ff"/>
<text transform="translate(773,304.65) scale(0.62,1)" x="0 9.03226" y="0" font-size="10.9" fill="#fff" stroke="#fff" stroke-width="0.28">L2</text>
<rect x="772.5" y="327.5" width="12" height="23" fill="none" stroke="#ffffff" stroke-width="1"/>
<rect x="773.9" y="330" width="9" height="7" rx="2.8" fill="#0000ff"/>
<rect x="773.9" y="340" width="9" height="7" rx="2.8" fill="#0000ff"/>
<text transform="translate(761,341.65) scale(0.62,1)" x="0 9.03226" y="0" font-size="10.9" fill="#fff" stroke="#fff" stroke-width="0.28">C7</text>
<rect x="786.5" y="305.5" width="22" height="12" fill="none" stroke="#ffffff" stroke-width="1"/>
<rect x="797" y="305" width="1" height="13" fill="#ffffff" shape-rendering="crispEdges"/>
<rect x="789" y="307.75" width="7" height="7.5" rx="2.8" fill="#0000ff"/>
<rect x="798" y="307.75" width="7" height="7.5" rx="2.8" fill="#0000ff"/>
<text transform="translate(809,314.65) scale(0.62,1)" x="0 9.03226 18.0645" y="0" font-size="10.9" fill="#fff" stroke="#fff" stroke-width="0.28">C10</text>
<rect x="786.5" y="321.5" width="22" height="12" fill="none" stroke="#ffffff" stroke-width="1"/>
<rect x="797" y="321" width="1" height="13" fill="#ffffff" shape-rendering="crispEdges"/>
<rect x="789" y="323.75" width="7" height="7.5" rx="2.8" fill="#0000ff"/>
<rect x="798" y="323.75" width="7" height="7.5" rx="2.8" fill="#0000ff"/>
<text transform="translate(809,330.65) scale(0.62,1)" x="0 9.03226" y="0" font-size="10.9" fill="#fff" stroke="#fff" stroke-width="0.28">C9</text>
<rect x="786.5" y="337.5" width="22" height="13" fill="none" stroke="#ffffff" stroke-width="1"/>
<rect x="797" y="337" width="1" height="14" fill="#ffffff" shape-rendering="crispEdges"/>
<rect x="789" y="340.25" width="7" height="7.5" rx="2.8" fill="#0000ff"/>
<rect x="798" y="340.25" width="7" height="7.5" rx="2.8" fill="#0000ff"/>
<text transform="translate(809,347.15) scale(0.62,1)" x="0 9.03226" y="0" font-size="10.9" fill="#fff" stroke="#fff" stroke-width="0.28">C8</text>
<rect x="750.5" y="345.5" width="16" height="31" fill="none" stroke="#ffffff" stroke-width="1"/>
<rect x="750" y="360" width="17" height="1" fill="#ffffff" shape-rendering="crispEdges"/>
<rect x="753.7" y="348.3" width="10" height="9" rx="3.6" fill="#0000ff"/>
<rect x="753.7" y="363.6" width="10" height="9" rx="3.6" fill="#0000ff"/>
<text transform="translate(739,369.15) scale(0.62,1)" x="0 9.03226" y="0" font-size="10.9" fill="#fff" stroke="#fff" stroke-width="0.28">C3</text>
<rect x="768.5" y="360.5" width="24" height="16" fill="none" stroke="#ffffff" stroke-width="1"/>
<rect x="779" y="360" width="1" height="16" fill="#ffffff" shape-rendering="crispEdges"/>
<rect x="770.2" y="363.6" width="6" height="9" rx="2.4" fill="#0000ff"/>
<rect x="783.6" y="363.6" width="6" height="9" rx="2.4" fill="#0000ff"/>
<text transform="translate(775.5,358.45) scale(0.62,1)" x="0 9.03226" y="0" font-size="10.9" fill="#fff" stroke="#fff" stroke-width="0.28">L1</text>
<rect x="753.5" y="384.5" width="11" height="22" fill="none" stroke="#ffffff" stroke-width="1"/>
<rect x="754.8" y="386" width="7" height="7" rx="2.8" fill="#0000ff"/>
<rect x="754.8" y="396.5" width="7" height="7" rx="2.8" fill="#ff0000"/>
<text transform="translate(756,416.15) scale(0.62,1)" x="0 9.03226" y="0" font-size="10.9" fill="#fff" stroke="#fff" stroke-width="0.28">R1</text>
<rect x="775.5" y="387.5" width="13" height="21" fill="none" stroke="#ffffff" stroke-width="1"/>
<rect x="775" y="398" width="13" height="1" fill="#ffffff" shape-rendering="crispEdges"/>
<rect x="778" y="389.7" width="8" height="7" rx="2.8" fill="#ff0000"/>
<rect x="778" y="399.7" width="8" height="7" rx="2.8" fill="#0000ff"/>
<text transform="translate(777,417.55) scale(0.62,1)" x="0 9.03226" y="0" font-size="10.9" fill="#fff" stroke="#fff" stroke-width="0.28">C1</text>
<rect x="789.5" y="387.5" width="13" height="21" fill="none" stroke="#ffffff" stroke-width="1"/>
<rect x="789" y="398" width="13" height="1" fill="#ffffff" shape-rendering="crispEdges"/>
<rect x="792" y="389.7" width="8" height="7" rx="2.8" fill="#ff0000"/>
<rect x="792" y="399.7" width="8" height="7" rx="2.8" fill="#0000ff"/>
<text transform="translate(791,417.55) scale(0.62,1)" x="0 9.03226" y="0" font-size="10.9" fill="#fff" stroke="#fff" stroke-width="0.28">C2</text>
<rect x="803.5" y="387.5" width="12" height="21" fill="none" stroke="#ffffff" stroke-width="1"/>
<rect x="803" y="398" width="12" height="1" fill="#ffffff" shape-rendering="crispEdges"/>
<rect x="805.5" y="389.7" width="8" height="7" rx="2.8" fill="#ff0000"/>
<rect x="805.5" y="399.7" width="8" height="7" rx="2.8" fill="#0000ff"/>
<text transform="translate(805,417.55) scale(0.62,1)" x="0 9.03226" y="0" font-size="10.9" fill="#fff" stroke="#fff" stroke-width="0.28">R2</text>
<rect x="818" y="361" width="27" height="1" fill="#ffffff" shape-rendering="crispEdges"/>
<rect x="818" y="361" width="1" height="4" fill="#ffffff" shape-rendering="crispEdges"/>
<rect x="844" y="361" width="1" height="4" fill="#ffffff" shape-rendering="crispEdges"/>
<rect x="818" y="388" width="22" height="1" fill="#ffffff" shape-rendering="crispEdges"/>
<rect x="818" y="384" width="1" height="5" fill="#ffffff" shape-rendering="crispEdges"/>
<rect x="844" y="384" width="1" height="5" fill="#ffffff" shape-rendering="crispEdges"/>
<rect x="833" y="385" width="5" height="1" fill="#ffffff" shape-rendering="crispEdges"/>
<rect x="833" y="385" width="1" height="3" fill="#ffffff" shape-rendering="crispEdges"/>
<rect x="838" y="385" width="1" height="3" fill="#ffffff" shape-rendering="crispEdges"/>
<rect x="808" y="364.7" width="9" height="1.5" fill="#0000ff" />
<rect x="845.5" y="364.7" width="10" height="1.5" fill="#0000ff" />
<rect x="808" y="368.8" width="9" height="1.5" fill="#0000ff" />
<rect x="845.5" y="368.8" width="10" height="1.5" fill="#0000ff" />
<rect x="808" y="372.8" width="9" height="1.5" fill="#0000ff" />
<rect x="845.5" y="372.8" width="10" height="1.5" fill="#0000ff" />
<rect x="808" y="377.2" width="9" height="1.5" fill="#0000ff" />
<rect x="845.5" y="377.2" width="10" height="1.5" fill="#0000ff" />
<rect x="808" y="381.5" width="9" height="1.5" fill="#ff0000" />
<rect x="845.5" y="381.5" width="10" height="1.5" fill="#0000ff" />
<text transform="translate(838.6,358.45) scale(0.62,1)" x="0 9.03226" y="0" font-size="10.9" fill="#fff" stroke="#fff" stroke-width="0.28">U3</text>
<text x="847" y="386.752" font-size="8" fill="#ffffff" text-anchor="start">&#916;</text>
<circle cx="828.7" cy="359.7" r="5" fill="#000" />
<circle cx="828.7" cy="359.7" r="2.9" fill="#d8c800" />
<circle cx="828.7" cy="359.7" r="1.3" fill="#c4c4d0" />
<circle cx="828.7" cy="369.2" r="5" fill="#000" />
<circle cx="828.7" cy="369.2" r="2.9" fill="#d8c800" />
<circle cx="828.7" cy="369.2" r="1.3" fill="#c4c4d0" />
<path d="M877.8,329.5 L928.3,329.5 L940.4,342 L940.4,403 L927.3,416.3 L879,416.3 L869.4,401 L869.4,338 Z" fill="none" stroke="#000" stroke-width="2.6" />
<ellipse cx="896.3" cy="353.1" rx="9" ry="11.6" fill="#0000ff" />
<ellipse cx="896.3" cy="391.5" rx="9" ry="11.6" fill="#0000ff" />
<rect x="882" y="350" width="1" height="44" fill="#ffffff" shape-rendering="crispEdges"/>
<rect x="882" y="350" width="4" height="1" fill="#ffffff" shape-rendering="crispEdges"/>
<rect x="910" y="350" width="1" height="44" fill="#ffffff" shape-rendering="crispEdges"/>
<rect x="906" y="350" width="5" height="1" fill="#ffffff" shape-rendering="crispEdges"/>
<rect x="889.5" y="370.5" width="13" height="5" fill="none" stroke="#ffffff" stroke-width="1"/>
<rect x="888" y="368" width="16" height="1" fill="#ffffff" shape-rendering="crispEdges"/>
<text transform="translate(889,336.75) scale(0.62,1)" x="0 9.03226 18.0645" y="0" font-size="10.9" fill="#fff" stroke="#fff" stroke-width="0.28">XTL</text>
<rect x="867.5" y="346.5" width="12" height="21" fill="none" stroke="#ffffff" stroke-width="1"/>
<rect x="867" y="357" width="13" height="1" fill="#ffffff" shape-rendering="crispEdges"/>
<rect x="870.2" y="348.6" width="8" height="7" rx="2.8" fill="#0000ff"/>
<rect x="870.2" y="358.1" width="8" height="7" rx="2.8" fill="#0000ff"/>
<text transform="translate(866,376.25) scale(0.62,1)" x="0 9.03226 18.0645" y="0" font-size="10.9" fill="#fff" stroke="#fff" stroke-width="0.28">C17</text>
<rect x="913.5" y="347.5" width="14" height="22" fill="none" stroke="#ffffff" stroke-width="1"/>
<rect x="913" y="357" width="15" height="1" fill="#ffffff" shape-rendering="crispEdges"/>
<rect x="916" y="348.6" width="8" height="7" rx="2.8" fill="#0000ff"/>
<rect x="916" y="358.6" width="8" height="7" rx="2.8" fill="#0000ff"/>
<text transform="translate(914,344.75) scale(0.62,1)" x="0 9.03226 18.0645" y="0" font-size="10.9" fill="#fff" stroke="#fff" stroke-width="0.28">C16</text>
<rect x="913.5" y="376.5" width="14" height="20" fill="none" stroke="#ffffff" stroke-width="1"/>
<rect x="913" y="386" width="15" height="1" fill="#ffffff" shape-rendering="crispEdges"/>
<rect x="916" y="377.5" width="8" height="7" rx="2.8" fill="#0000ff"/>
<rect x="916" y="386.8" width="8" height="7" rx="2.8" fill="#0000ff"/>
<text transform="translate(914,405.15) scale(0.62,1)" x="0 9.03226 18.0645" y="0" font-size="10.9" fill="#fff" stroke="#fff" stroke-width="0.28">C11</text>
<rect x="1146.5" y="349.5" width="10" height="23" fill="none" stroke="#ffffff" stroke-width="1"/>
<rect x="1148" y="351.5" width="6" height="6" rx="2.4" fill="#0000ff"/>
<rect x="1148" y="361.5" width="6" height="6" rx="2.4" fill="#0000ff"/>
<text transform="translate(1145,345.15) scale(0.62,1)" x="0 9.03226" y="0" font-size="10.9" fill="#fff" stroke="#fff" stroke-width="0.28">R3</text>
<rect x="778" y="464" width="43" height="1" fill="#ffffff" shape-rendering="crispEdges"/>
<rect x="778" y="495" width="43" height="1" fill="#ffffff" shape-rendering="crispEdges"/>
<rect x="799" y="464" width="1" height="5" fill="#ffffff" shape-rendering="crispEdges"/>
<rect x="799" y="490" width="1" height="5" fill="#ffffff" shape-rendering="crispEdges"/>
<rect x="778" y="464" width="1" height="4" fill="#ffffff" shape-rendering="crispEdges"/>
<rect x="778" y="479" width="1" height="4" fill="#ffffff" shape-rendering="crispEdges"/>
<rect x="778" y="491" width="1" height="4" fill="#ffffff" shape-rendering="crispEdges"/>
<rect x="820" y="464" width="1" height="4" fill="#ffffff" shape-rendering="crispEdges"/>
<rect x="820" y="479" width="1" height="4" fill="#ffffff" shape-rendering="crispEdges"/>
<rect x="820" y="491" width="1" height="4" fill="#ffffff" shape-rendering="crispEdges"/>
<circle cx="798.6" cy="473.3" r="2.4" fill="none" stroke="#fff" stroke-width="1"/>
<circle cx="798.6" cy="486" r="2.4" fill="none" stroke="#fff" stroke-width="1"/>
<line x1="788.6" y1="480.7" x2="797.1" y2="474.5" stroke="#ffffff" stroke-width="1"/>
<rect x="854" y="464" width="43" height="1" fill="#ffffff" shape-rendering="crispEdges"/>
<rect x="854" y="495" width="43" height="1" fill="#ffffff" shape-rendering="crispEdges"/>
<rect x="875" y="464" width="1" height="5" fill="#ffffff" shape-rendering="crispEdges"/>
<rect x="875" y="490" width="1" height="5" fill="#ffffff" shape-rendering="crispEdges"/>
<rect x="854" y="464" width="1" height="4" fill="#ffffff" shape-rendering="crispEdges"/>
<rect x="854" y="479" width="1" height="4" fill="#ffffff" shape-rendering="crispEdges"/>
<rect x="854" y="491" width="1" height="4" fill="#ffffff" shape-rendering="crispEdges"/>
<rect x="896" y="464" width="1" height="4" fill="#ffffff" shape-rendering="crispEdges"/>
<rect x="896" y="479" width="1" height="4" fill="#ffffff" shape-rendering="crispEdges"/>
<rect x="896" y="491" width="1" height="4" fill="#ffffff" shape-rendering="crispEdges"/>
<circle cx="875" cy="473.3" r="2.4" fill="none" stroke="#fff" stroke-width="1"/>
<circle cx="875" cy="486" r="2.4" fill="none" stroke="#fff" stroke-width="1"/>
<line x1="865" y1="480.7" x2="873.5" y2="474.5" stroke="#ffffff" stroke-width="1"/>
<rect x="924" y="464" width="44" height="1" fill="#ffffff" shape-rendering="crispEdges"/>
<rect x="924" y="495" width="44" height="1" fill="#ffffff" shape-rendering="crispEdges"/>
<rect x="945" y="464" width="1" height="5" fill="#ffffff" shape-rendering="crispEdges"/>
<rect x="945" y="490" width="1" height="5" fill="#ffffff" shape-rendering="crispEdges"/>
<rect x="924" y="464" width="1" height="4" fill="#ffffff" shape-rendering="crispEdges"/>
<rect x="924" y="479" width="1" height="4" fill="#ffffff" shape-rendering="crispEdges"/>
<rect x="924" y="491" width="1" height="4" fill="#ffffff" shape-rendering="crispEdges"/>
<rect x="967" y="464" width="1" height="4" fill="#ffffff" shape-rendering="crispEdges"/>
<rect x="967" y="479" width="1" height="4" fill="#ffffff" shape-rendering="crispEdges"/>
<rect x="967" y="491" width="1" height="4" fill="#ffffff" shape-rendering="crispEdges"/>
<circle cx="945" cy="473.3" r="2.4" fill="none" stroke="#fff" stroke-width="1"/>
<circle cx="945" cy="486" r="2.4" fill="none" stroke="#fff" stroke-width="1"/>
<line x1="935" y1="480.7" x2="943.5" y2="474.5" stroke="#ffffff" stroke-width="1"/>
<rect x="998" y="464" width="43" height="1" fill="#ffffff" shape-rendering="crispEdges"/>
<rect x="998" y="495" width="43" height="1" fill="#ffffff" shape-rendering="crispEdges"/>
<rect x="1019" y="464" width="1" height="5" fill="#ffffff" shape-rendering="crispEdges"/>
<rect x="1019" y="490" width="1" height="5" fill="#ffffff" shape-rendering="crispEdges"/>
<rect x="998" y="464" width="1" height="4" fill="#ffffff" shape-rendering="crispEdges"/>
<rect x="998" y="479" width="1" height="4" fill="#ffffff" shape-rendering="crispEdges"/>
<rect x="998" y="491" width="1" height="4" fill="#ffffff" shape-rendering="crispEdges"/>
<rect x="1040" y="464" width="1" height="4" fill="#ffffff" shape-rendering="crispEdges"/>
<rect x="1040" y="479" width="1" height="4" fill="#ffffff" shape-rendering="crispEdges"/>
<rect x="1040" y="491" width="1" height="4" fill="#ffffff" shape-rendering="crispEdges"/>
<circle cx="1018.6" cy="473.3" r="2.4" fill="none" stroke="#fff" stroke-width="1"/>
<circle cx="1018.6" cy="486" r="2.4" fill="none" stroke="#fff" stroke-width="1"/>
<line x1="1008.6" y1="480.7" x2="1017.1" y2="474.5" stroke="#ffffff" stroke-width="1"/>
<rect x="768" y="469.5" width="282" height="4.5" fill="#008000" />
<text transform="translate(795.3,455.15) scale(0.62,1)" x="0 9.03226 18.0645 27.0968" y="0" font-size="10.9" fill="#fff" stroke="#fff" stroke-width="0.28">SW12</text>
<text transform="translate(866.4,455.15) scale(0.62,1)" x="0 9.03226 18.0645 27.0968" y="0" font-size="10.9" fill="#fff" stroke="#fff" stroke-width="0.28">SW11</text>
<text transform="translate(935.2,455.15) scale(0.62,1)" x="0 9.03226 18.0645 27.0968" y="0" font-size="10.9" fill="#fff" stroke="#fff" stroke-width="0.28">SW10</text>
<text transform="translate(1011,455.15) scale(0.62,1)" x="0 9.03226 18.0645" y="0" font-size="10.9" fill="#fff" stroke="#fff" stroke-width="0.28">SW9</text>
<rect x="769.15" y="468.6" width="13.7" height="7.4" rx="2.96" fill="#ff0000"/>
<rect x="769.15" y="483.8" width="13.7" height="7.4" rx="2.96" fill="#0000ff"/>
<rect x="814.05" y="468.6" width="13.7" height="7.4" rx="2.96" fill="#ff0000"/>
<rect x="814.05" y="483.8" width="13.7" height="7.4" rx="2.96" fill="#0000ff"/>
<rect x="845.95" y="468.6" width="13.7" height="7.4" rx="2.96" fill="#ff0000"/>
<rect x="845.95" y="483.8" width="13.7" height="7.4" rx="2.96" fill="#0000ff"/>
<rect x="890.95" y="468.6" width="13.7" height="7.4" rx="2.96" fill="#ff0000"/>
<rect x="890.95" y="483.8" width="13.7" height="7.4" rx="2.96" fill="#0000ff"/>
<rect x="916.95" y="468.6" width="13.7" height="7.4" rx="2.96" fill="#ff0000"/>
<rect x="916.95" y="483.8" width="13.7" height="7.4" rx="2.96" fill="#0000ff"/>
<rect x="961.75" y="468.6" width="13.7" height="7.4" rx="2.96" fill="#ff0000"/>
<rect x="961.75" y="483.8" width="13.7" height="7.4" rx="2.96" fill="#0000ff"/>
<rect x="990.45" y="468.6" width="13.7" height="7.4" rx="2.96" fill="#ff0000"/>
<rect x="990.45" y="483.8" width="13.7" height="7.4" rx="2.96" fill="#0000ff"/>
<rect x="1035.45" y="468.6" width="13.7" height="7.4" rx="2.96" fill="#ff0000"/>
<rect x="1035.45" y="483.8" width="13.7" height="7.4" rx="2.96" fill="#0000ff"/>
<rect x="751" y="467" width="13" height="21" fill="#800000" />
<rect x="751.5" y="467.5" width="13" height="21" fill="none" stroke="#ffffff" stroke-width="1"/>
<rect x="751" y="478" width="14" height="1" fill="#ffffff" shape-rendering="crispEdges"/>
<rect x="754" y="468.8" width="8" height="7" rx="2.8" fill="#ff0000"/>
<rect x="754" y="478.8" width="8" height="7" rx="2.8" fill="#0000ff"/>
<text transform="translate(750,499.45) scale(0.62,1)" x="0 9.03226 18.0645" y="0" font-size="10.9" fill="#fff" stroke="#fff" stroke-width="0.28">C20</text>
<circle cx="757.6" cy="461" r="4" fill="#000" />
<circle cx="757.6" cy="461" r="2.32" fill="#ff0000" />
<rect x="815.6" y="508" width="11" height="22" fill="#800000" />
<rect x="816.5" y="508.5" width="11" height="22" fill="none" stroke="#ffffff" stroke-width="1"/>
<rect x="818.6" y="510.8" width="6" height="6" rx="2.4" fill="#0000ff"/>
<rect x="818.6" y="520.8" width="6" height="6" rx="2.4" fill="#0000ff"/>
<rect x="828.3" y="508" width="10.4" height="22" fill="#800000" />
<rect x="828.5" y="508.5" width="11" height="22" fill="none" stroke="#ffffff" stroke-width="1"/>
<rect x="831" y="510.8" width="6" height="6" rx="2.4" fill="#0000ff"/>
<rect x="831" y="520.8" width="6" height="6" rx="2.4" fill="#0000ff"/>
<rect x="892.7" y="508" width="10.8" height="22" fill="#800000" />
<rect x="893.5" y="508.5" width="11" height="22" fill="none" stroke="#ffffff" stroke-width="1"/>
<rect x="895.6" y="510.8" width="6" height="6" rx="2.4" fill="#0000ff"/>
<rect x="895.6" y="520.8" width="6" height="6" rx="2.4" fill="#0000ff"/>
<rect x="905" y="508" width="10.5" height="22" fill="#800000" />
<rect x="905.5" y="508.5" width="11" height="22" fill="none" stroke="#ffffff" stroke-width="1"/>
<rect x="907.75" y="510.8" width="6" height="6" rx="2.4" fill="#0000ff"/>
<rect x="907.75" y="520.8" width="6" height="6" rx="2.4" fill="#0000ff"/>
<rect x="962" y="508" width="11" height="22" fill="#800000" />
<rect x="962.5" y="508.5" width="11" height="22" fill="none" stroke="#ffffff" stroke-width="1"/>
<rect x="965" y="510.8" width="6" height="6" rx="2.4" fill="#0000ff"/>
<rect x="965" y="520.8" width="6" height="6" rx="2.4" fill="#0000ff"/>
<rect x="974.5" y="508" width="10.5" height="22" fill="#800000" />
<rect x="974.5" y="508.5" width="11" height="22" fill="none" stroke="#ffffff" stroke-width="1"/>
<rect x="977.25" y="510.8" width="6" height="6" rx="2.4" fill="#0000ff"/>
<rect x="977.25" y="520.8" width="6" height="6" rx="2.4" fill="#0000ff"/>
<rect x="1035.5" y="508" width="10.5" height="22" fill="#800000" />
<rect x="1036.5" y="508.5" width="10" height="22" fill="none" stroke="#ffffff" stroke-width="1"/>
<rect x="1038.25" y="510.8" width="6" height="6" rx="2.4" fill="#0000ff"/>
<rect x="1038.25" y="520.8" width="6" height="6" rx="2.4" fill="#0000ff"/>
<rect x="1048.3" y="508" width="10" height="22" fill="#800000" />
<rect x="1048.5" y="508.5" width="10" height="22" fill="none" stroke="#ffffff" stroke-width="1"/>
<rect x="1050.8" y="510.8" width="6" height="6" rx="2.4" fill="#0000ff"/>
<rect x="1050.8" y="520.8" width="6" height="6" rx="2.4" fill="#0000ff"/>
<text transform="translate(809.6,538.55) scale(0.62,1)" x="0 9.03226 18.0645" y="0" font-size="10.9" fill="#fff" stroke="#fff" stroke-width="0.28">R19</text>
<text transform="translate(829,538.55) scale(0.62,1)" x="0 9.03226 18.0645" y="0" font-size="10.9" fill="#fff" stroke="#fff" stroke-width="0.28">R15</text>
<text transform="translate(888.5,538.55) scale(0.62,1)" x="0 9.03226 18.0645" y="0" font-size="10.9" fill="#fff" stroke="#fff" stroke-width="0.28">R18</text>
<text transform="translate(904,538.55) scale(0.62,1)" x="0 9.03226 18.0645" y="0" font-size="10.9" fill="#fff" stroke="#fff" stroke-width="0.28">R14</text>
<text transform="translate(957,538.55) scale(0.62,1)" x="0 9.03226 18.0645" y="0" font-size="10.9" fill="#fff" stroke="#fff" stroke-width="0.28">R13</text>
<text transform="translate(974,538.55) scale(0.62,1)" x="0 9.03226 18.0645" y="0" font-size="10.9" fill="#fff" stroke="#fff" stroke-width="0.28">R17</text>
<text transform="translate(1030,540.15) scale(0.62,1)" x="0 9.03226 18.0645" y="0" font-size="10.9" fill="#fff" stroke="#fff" stroke-width="0.28">R12</text>
<text transform="translate(1048,540.15) scale(0.62,1)" x="0 9.03226 18.0645" y="0" font-size="10.9" fill="#fff" stroke="#fff" stroke-width="0.28">R16</text>
<rect x="1084" y="467.8" width="62" height="9" fill="#800000" />
<rect x="1084" y="472" width="62" height="1" fill="#008000" shape-rendering="crispEdges"/>
<ellipse cx="1094.5" cy="472.3" rx="10" ry="6" fill="#800000" />
<ellipse cx="1094.5" cy="487.1" rx="10.5" ry="6.5" fill="#800000" />
<rect x="1093.8" y="480.1" width="1.4" height="14" fill="#008000" />
<rect x="1083.5" y="486.5" width="22" height="1.2" fill="#008000" />
<ellipse cx="1139.5" cy="472.3" rx="10" ry="6" fill="#800000" />
<ellipse cx="1139.5" cy="487.1" rx="10.5" ry="6.5" fill="#800000" />
<rect x="1138.8" y="480.1" width="1.4" height="14" fill="#008000" />
<rect x="1128.5" y="486.5" width="22" height="1.2" fill="#008000" />
<rect x="1084" y="511" width="62" height="9" fill="#800000" />
<rect x="1084" y="516" width="62" height="1" fill="#008000" shape-rendering="crispEdges"/>
<ellipse cx="1094.5" cy="515.5" rx="10" ry="6" fill="#800000" />
<ellipse cx="1094.5" cy="530.3" rx="10.5" ry="6.5" fill="#800000" />
<rect x="1093.8" y="523.3" width="1.4" height="14" fill="#008000" />
<rect x="1083.5" y="529.7" width="22" height="1.2" fill="#008000" />
<ellipse cx="1139.5" cy="515.5" rx="10" ry="6" fill="#800000" />
<ellipse cx="1139.5" cy="530.3" rx="10.5" ry="6.5" fill="#800000" />
<rect x="1138.8" y="523.3" width="1.4" height="14" fill="#008000" />
<rect x="1128.5" y="529.7" width="22" height="1.2" fill="#008000" />
<rect x="1084" y="554.9" width="62" height="9" fill="#800000" />
<rect x="1084" y="559" width="62" height="1" fill="#008000" shape-rendering="crispEdges"/>
<ellipse cx="1094.5" cy="559.4" rx="10" ry="6" fill="#800000" />
<ellipse cx="1094.5" cy="574.2" rx="10.5" ry="6.5" fill="#800000" />
<rect x="1093.8" y="567.2" width="1.4" height="14" fill="#008000" />
<rect x="1083.5" y="573.6" width="22" height="1.2" fill="#008000" />
<ellipse cx="1139.5" cy="559.4" rx="10" ry="6" fill="#800000" />
<ellipse cx="1139.5" cy="574.2" rx="10.5" ry="6.5" fill="#800000" />
<rect x="1138.8" y="567.2" width="1.4" height="14" fill="#008000" />
<rect x="1128.5" y="573.6" width="22" height="1.2" fill="#008000" />
<rect x="1084" y="600.8" width="62" height="9" fill="#800000" />
<rect x="1084" y="605" width="62" height="1" fill="#008000" shape-rendering="crispEdges"/>
<ellipse cx="1094.5" cy="605.3" rx="10" ry="6" fill="#800000" />
<ellipse cx="1094.5" cy="620.1" rx="10.5" ry="6.5" fill="#800000" />
<rect x="1093.8" y="613.1" width="1.4" height="14" fill="#008000" />
<rect x="1083.5" y="619.5" width="22" height="1.2" fill="#008000" />
<ellipse cx="1139.5" cy="605.3" rx="10" ry="6" fill="#800000" />
<ellipse cx="1139.5" cy="620.1" rx="10.5" ry="6.5" fill="#800000" />
<rect x="1138.8" y="613.1" width="1.4" height="14" fill="#008000" />
<rect x="1128.5" y="619.5" width="22" height="1.2" fill="#008000" />
<rect x="1084" y="643.8" width="62" height="9" fill="#800000" />
<rect x="1084" y="648" width="62" height="1" fill="#008000" shape-rendering="crispEdges"/>
<ellipse cx="1094.5" cy="648.3" rx="10" ry="6" fill="#800000" />
<ellipse cx="1094.5" cy="663.1" rx="10.5" ry="6.5" fill="#800000" />
<rect x="1093.8" y="656.1" width="1.4" height="14" fill="#008000" />
<rect x="1083.5" y="662.5" width="22" height="1.2" fill="#008000" />
<ellipse cx="1139.5" cy="648.3" rx="10" ry="6" fill="#800000" />
<ellipse cx="1139.5" cy="663.1" rx="10.5" ry="6.5" fill="#800000" />
<rect x="1138.8" y="656.1" width="1.4" height="14" fill="#008000" />
<rect x="1128.5" y="662.5" width="22" height="1.2" fill="#008000" />
<rect x="1084" y="688.1" width="62" height="9" fill="#800000" />
<rect x="1084" y="693" width="62" height="1" fill="#008000" shape-rendering="crispEdges"/>
<ellipse cx="1094.5" cy="692.6" rx="10" ry="6" fill="#800000" />
<ellipse cx="1094.5" cy="707.4" rx="10.5" ry="6.5" fill="#800000" />
<rect x="1093.8" y="700.4" width="1.4" height="14" fill="#008000" />
<rect x="1083.5" y="706.8" width="22" height="1.2" fill="#008000" />
<ellipse cx="1139.5" cy="692.6" rx="10" ry="6" fill="#800000" />
<ellipse cx="1139.5" cy="707.4" rx="10.5" ry="6.5" fill="#800000" />
<rect x="1138.8" y="700.4" width="1.4" height="14" fill="#008000" />
<rect x="1128.5" y="706.8" width="22" height="1.2" fill="#008000" />
<rect x="1084" y="732.8" width="62" height="9" fill="#800000" />
<rect x="1084" y="737" width="62" height="1" fill="#008000" shape-rendering="crispEdges"/>
<ellipse cx="1094.5" cy="737.3" rx="10" ry="6" fill="#800000" />
<ellipse cx="1094.5" cy="752.1" rx="10.5" ry="6.5" fill="#800000" />
<rect x="1093.8" y="745.1" width="1.4" height="14" fill="#008000" />
<rect x="1083.5" y="751.5" width="22" height="1.2" fill="#008000" />
<ellipse cx="1139.5" cy="737.3" rx="10" ry="6" fill="#800000" />
<ellipse cx="1139.5" cy="752.1" rx="10.5" ry="6.5" fill="#800000" />
<rect x="1138.8" y="745.1" width="1.4" height="14" fill="#008000" />
<rect x="1128.5" y="751.5" width="22" height="1.2" fill="#008000" />
<rect x="1084" y="777.1" width="62" height="9" fill="#800000" />
<rect x="1084" y="782" width="62" height="1" fill="#008000" shape-rendering="crispEdges"/>
<ellipse cx="1094.5" cy="781.6" rx="10" ry="6" fill="#800000" />
<ellipse cx="1094.5" cy="796.4" rx="10.5" ry="6.5" fill="#800000" />
<rect x="1093.8" y="789.4" width="1.4" height="14" fill="#008000" />
<rect x="1083.5" y="795.8" width="22" height="1.2" fill="#008000" />
<ellipse cx="1139.5" cy="781.6" rx="10" ry="6" fill="#800000" />
<ellipse cx="1139.5" cy="796.4" rx="10.5" ry="6.5" fill="#800000" />
<rect x="1138.8" y="789.4" width="1.4" height="14" fill="#008000" />
<rect x="1128.5" y="795.8" width="22" height="1.2" fill="#008000" />
<rect x="1096" y="464" width="42" height="1" fill="#ffffff" shape-rendering="crispEdges"/>
<rect x="1096" y="495" width="42" height="1" fill="#ffffff" shape-rendering="crispEdges"/>
<rect x="1116" y="464" width="1" height="7" fill="#ffffff" shape-rendering="crispEdges"/>
<circle cx="1115.5" cy="473.3" r="2.3" fill="none" stroke="#fff" stroke-width="1"/>
<circle cx="1115.5" cy="486.1" r="2.6" fill="none" stroke="#fff" stroke-width="1"/>
<rect x="1116" y="489" width="1" height="6" fill="#ffffff" shape-rendering="crispEdges"/>
<line x1="1117.5" y1="484.6" x2="1125.5" y2="478.1" stroke="#ffffff" stroke-width="1"/>
<rect x="1096" y="464" width="1" height="4" fill="#ffffff" shape-rendering="crispEdges"/>
<rect x="1096" y="476" width="1" height="5" fill="#ffffff" shape-rendering="crispEdges"/>
<rect x="1096" y="491" width="1" height="4" fill="#ffffff" shape-rendering="crispEdges"/>
<rect x="1138" y="464" width="1" height="4" fill="#ffffff" shape-rendering="crispEdges"/>
<rect x="1138" y="476" width="1" height="5" fill="#ffffff" shape-rendering="crispEdges"/>
<rect x="1138" y="491" width="1" height="4" fill="#ffffff" shape-rendering="crispEdges"/>
<rect x="1087.5" y="468.55" width="14" height="7.5" rx="3" fill="#0000ff"/>
<rect x="1087.5" y="483.35" width="14" height="7.5" rx="3" fill="#0000ff"/>
<rect x="1132.5" y="468.55" width="14" height="7.5" rx="3" fill="#0000ff"/>
<rect x="1132.5" y="483.35" width="14" height="7.5" rx="3" fill="#0000ff"/>
<rect x="1096" y="508" width="42" height="1" fill="#ffffff" shape-rendering="crispEdges"/>
<rect x="1096" y="538" width="42" height="1" fill="#ffffff" shape-rendering="crispEdges"/>
<rect x="1116" y="508" width="1" height="6" fill="#ffffff" shape-rendering="crispEdges"/>
<circle cx="1115.5" cy="516.5" r="2.3" fill="none" stroke="#fff" stroke-width="1"/>
<circle cx="1115.5" cy="529.3" r="2.6" fill="none" stroke="#fff" stroke-width="1"/>
<rect x="1116" y="532" width="1" height="6" fill="#ffffff" shape-rendering="crispEdges"/>
<line x1="1117.5" y1="527.8" x2="1125.5" y2="521.3" stroke="#ffffff" stroke-width="1"/>
<rect x="1096" y="508" width="1" height="4" fill="#ffffff" shape-rendering="crispEdges"/>
<rect x="1096" y="520" width="1" height="4" fill="#ffffff" shape-rendering="crispEdges"/>
<rect x="1096" y="534" width="1" height="4" fill="#ffffff" shape-rendering="crispEdges"/>
<rect x="1138" y="508" width="1" height="4" fill="#ffffff" shape-rendering="crispEdges"/>
<rect x="1138" y="520" width="1" height="4" fill="#ffffff" shape-rendering="crispEdges"/>
<rect x="1138" y="534" width="1" height="4" fill="#ffffff" shape-rendering="crispEdges"/>
<rect x="1087.5" y="511.75" width="14" height="7.5" rx="3" fill="#0000ff"/>
<rect x="1087.5" y="526.55" width="14" height="7.5" rx="3" fill="#0000ff"/>
<rect x="1132.5" y="511.75" width="14" height="7.5" rx="3" fill="#0000ff"/>
<rect x="1132.5" y="526.55" width="14" height="7.5" rx="3" fill="#0000ff"/>
<rect x="1096" y="551" width="42" height="1" fill="#ffffff" shape-rendering="crispEdges"/>
<rect x="1096" y="582" width="42" height="1" fill="#ffffff" shape-rendering="crispEdges"/>
<rect x="1116" y="551" width="1" height="7" fill="#ffffff" shape-rendering="crispEdges"/>
<circle cx="1115.5" cy="560.4" r="2.3" fill="none" stroke="#fff" stroke-width="1"/>
<circle cx="1115.5" cy="573.2" r="2.6" fill="none" stroke="#fff" stroke-width="1"/>
<rect x="1116" y="576" width="1" height="6" fill="#ffffff" shape-rendering="crispEdges"/>
<line x1="1117.5" y1="571.7" x2="1125.5" y2="565.2" stroke="#ffffff" stroke-width="1"/>
<rect x="1096" y="551" width="1" height="4" fill="#ffffff" shape-rendering="crispEdges"/>
<rect x="1096" y="563" width="1" height="5" fill="#ffffff" shape-rendering="crispEdges"/>
<rect x="1096" y="578" width="1" height="4" fill="#ffffff" shape-rendering="crispEdges"/>
<rect x="1138" y="551" width="1" height="4" fill="#ffffff" shape-rendering="crispEdges"/>
<rect x="1138" y="563" width="1" height="5" fill="#ffffff" shape-rendering="crispEdges"/>
<rect x="1138" y="578" width="1" height="4" fill="#ffffff" shape-rendering="crispEdges"/>
<rect x="1087.5" y="555.65" width="14" height="7.5" rx="3" fill="#0000ff"/>
<rect x="1087.5" y="570.45" width="14" height="7.5" rx="3" fill="#0000ff"/>
<rect x="1132.5" y="555.65" width="14" height="7.5" rx="3" fill="#0000ff"/>
<rect x="1132.5" y="570.45" width="14" height="7.5" rx="3" fill="#0000ff"/>
<rect x="1096" y="597" width="42" height="1" fill="#ffffff" shape-rendering="crispEdges"/>
<rect x="1096" y="628" width="42" height="1" fill="#ffffff" shape-rendering="crispEdges"/>
<rect x="1116" y="597" width="1" height="7" fill="#ffffff" shape-rendering="crispEdges"/>
<circle cx="1115.5" cy="606.3" r="2.3" fill="none" stroke="#fff" stroke-width="1"/>
<circle cx="1115.5" cy="619.1" r="2.6" fill="none" stroke="#fff" stroke-width="1"/>
<rect x="1116" y="622" width="1" height="6" fill="#ffffff" shape-rendering="crispEdges"/>
<line x1="1117.5" y1="617.6" x2="1125.5" y2="611.1" stroke="#ffffff" stroke-width="1"/>
<rect x="1096" y="597" width="1" height="4" fill="#ffffff" shape-rendering="crispEdges"/>
<rect x="1096" y="609" width="1" height="5" fill="#ffffff" shape-rendering="crispEdges"/>
<rect x="1096" y="624" width="1" height="4" fill="#ffffff" shape-rendering="crispEdges"/>
<rect x="1138" y="597" width="1" height="4" fill="#ffffff" shape-rendering="crispEdges"/>
<rect x="1138" y="609" width="1" height="5" fill="#ffffff" shape-rendering="crispEdges"/>
<rect x="1138" y="624" width="1" height="4" fill="#ffffff" shape-rendering="crispEdges"/>
<rect x="1087.5" y="601.55" width="14" height="7.5" rx="3" fill="#0000ff"/>
<rect x="1087.5" y="616.35" width="14" height="7.5" rx="3" fill="#0000ff"/>
<rect x="1132.5" y="601.55" width="14" height="7.5" rx="3" fill="#0000ff"/>
<rect x="1132.5" y="616.35" width="14" height="7.5" rx="3" fill="#0000ff"/>
<rect x="1096" y="640" width="42" height="1" fill="#ffffff" shape-rendering="crispEdges"/>
<rect x="1096" y="671" width="42" height="1" fill="#ffffff" shape-rendering="crispEdges"/>
<rect x="1116" y="640" width="1" height="7" fill="#ffffff" shape-rendering="crispEdges"/>
<circle cx="1115.5" cy="649.3" r="2.3" fill="none" stroke="#fff" stroke-width="1"/>
<circle cx="1115.5" cy="662.1" r="2.6" fill="none" stroke="#fff" stroke-width="1"/>
<rect x="1116" y="665" width="1" height="6" fill="#ffffff" shape-rendering="crispEdges"/>
<line x1="1117.5" y1="660.6" x2="1125.5" y2="654.1" stroke="#ffffff" stroke-width="1"/>
<rect x="1096" y="640" width="1" height="4" fill="#ffffff" shape-rendering="crispEdges"/>
<rect x="1096" y="652" width="1" height="5" fill="#ffffff" shape-rendering="crispEdges"/>
<rect x="1096" y="667" width="1" height="4" fill="#ffffff" shape-rendering="crispEdges"/>
<rect x="1138" y="640" width="1" height="4" fill="#ffffff" shape-rendering="crispEdges"/>
<rect x="1138" y="652" width="1" height="5" fill="#ffffff" shape-rendering="crispEdges"/>
<rect x="1138" y="667" width="1" height="4" fill="#ffffff" shape-rendering="crispEdges"/>
<rect x="1087.5" y="644.55" width="14" height="7.5" rx="3" fill="#0000ff"/>
<rect x="1087.5" y="659.35" width="14" height="7.5" rx="3" fill="#0000ff"/>
<rect x="1132.5" y="644.55" width="14" height="7.5" rx="3" fill="#0000ff"/>
<rect x="1132.5" y="659.35" width="14" height="7.5" rx="3" fill="#0000ff"/>
<rect x="1096" y="685" width="42" height="1" fill="#ffffff" shape-rendering="crispEdges"/>
<rect x="1096" y="716" width="42" height="1" fill="#ffffff" shape-rendering="crispEdges"/>
<rect x="1116" y="685" width="1" height="7" fill="#ffffff" shape-rendering="crispEdges"/>
<circle cx="1115.5" cy="693.6" r="2.3" fill="none" stroke="#fff" stroke-width="1"/>
<circle cx="1115.5" cy="706.4" r="2.6" fill="none" stroke="#fff" stroke-width="1"/>
<rect x="1116" y="709" width="1" height="7" fill="#ffffff" shape-rendering="crispEdges"/>
<line x1="1117.5" y1="704.9" x2="1125.5" y2="698.4" stroke="#ffffff" stroke-width="1"/>
<rect x="1096" y="685" width="1" height="4" fill="#ffffff" shape-rendering="crispEdges"/>
<rect x="1096" y="697" width="1" height="5" fill="#ffffff" shape-rendering="crispEdges"/>
<rect x="1096" y="712" width="1" height="4" fill="#ffffff" shape-rendering="crispEdges"/>
<rect x="1138" y="685" width="1" height="4" fill="#ffffff" shape-rendering="crispEdges"/>
<rect x="1138" y="697" width="1" height="5" fill="#ffffff" shape-rendering="crispEdges"/>
<rect x="1138" y="712" width="1" height="4" fill="#ffffff" shape-rendering="crispEdges"/>
<rect x="1087.5" y="688.85" width="14" height="7.5" rx="3" fill="#0000ff"/>
<rect x="1087.5" y="703.65" width="14" height="7.5" rx="3" fill="#0000ff"/>
<rect x="1132.5" y="688.85" width="14" height="7.5" rx="3" fill="#0000ff"/>
<rect x="1132.5" y="703.65" width="14" height="7.5" rx="3" fill="#0000ff"/>
<rect x="1096" y="729" width="42" height="1" fill="#ffffff" shape-rendering="crispEdges"/>
<rect x="1096" y="760" width="42" height="1" fill="#ffffff" shape-rendering="crispEdges"/>
<rect x="1116" y="729" width="1" height="7" fill="#ffffff" shape-rendering="crispEdges"/>
<circle cx="1115.5" cy="738.3" r="2.3" fill="none" stroke="#fff" stroke-width="1"/>
<circle cx="1115.5" cy="751.1" r="2.6" fill="none" stroke="#fff" stroke-width="1"/>
<rect x="1116" y="754" width="1" height="6" fill="#ffffff" shape-rendering="crispEdges"/>
<line x1="1117.5" y1="749.6" x2="1125.5" y2="743.1" stroke="#ffffff" stroke-width="1"/>
<rect x="1096" y="729" width="1" height="4" fill="#ffffff" shape-rendering="crispEdges"/>
<rect x="1096" y="741" width="1" height="5" fill="#ffffff" shape-rendering="crispEdges"/>
<rect x="1096" y="756" width="1" height="4" fill="#ffffff" shape-rendering="crispEdges"/>
<rect x="1138" y="729" width="1" height="4" fill="#ffffff" shape-rendering="crispEdges"/>
<rect x="1138" y="741" width="1" height="5" fill="#ffffff" shape-rendering="crispEdges"/>
<rect x="1138" y="756" width="1" height="4" fill="#ffffff" shape-rendering="crispEdges"/>
<rect x="1087.5" y="733.55" width="14" height="7.5" rx="3" fill="#0000ff"/>
<rect x="1087.5" y="748.35" width="14" height="7.5" rx="3" fill="#0000ff"/>
<rect x="1132.5" y="733.55" width="14" height="7.5" rx="3" fill="#0000ff"/>
<rect x="1132.5" y="748.35" width="14" height="7.5" rx="3" fill="#0000ff"/>
<rect x="1096" y="774" width="42" height="1" fill="#ffffff" shape-rendering="crispEdges"/>
<rect x="1096" y="805" width="42" height="1" fill="#ffffff" shape-rendering="crispEdges"/>
<rect x="1116" y="774" width="1" height="7" fill="#ffffff" shape-rendering="crispEdges"/>
<circle cx="1115.5" cy="782.6" r="2.3" fill="none" stroke="#fff" stroke-width="1"/>
<circle cx="1115.5" cy="795.4" r="2.6" fill="none" stroke="#fff" stroke-width="1"/>
<rect x="1116" y="798" width="1" height="7" fill="#ffffff" shape-rendering="crispEdges"/>
<line x1="1117.5" y1="793.9" x2="1125.5" y2="787.4" stroke="#ffffff" stroke-width="1"/>
<rect x="1096" y="774" width="1" height="4" fill="#ffffff" shape-rendering="crispEdges"/>
<rect x="1096" y="786" width="1" height="5" fill="#ffffff" shape-rendering="crispEdges"/>
<rect x="1096" y="801" width="1" height="4" fill="#ffffff" shape-rendering="crispEdges"/>
<rect x="1138" y="774" width="1" height="4" fill="#ffffff" shape-rendering="crispEdges"/>
<rect x="1138" y="786" width="1" height="5" fill="#ffffff" shape-rendering="crispEdges"/>
<rect x="1138" y="801" width="1" height="4" fill="#ffffff" shape-rendering="crispEdges"/>
<rect x="1087.5" y="777.85" width="14" height="7.5" rx="3" fill="#0000ff"/>
<rect x="1087.5" y="792.65" width="14" height="7.5" rx="3" fill="#0000ff"/>
<rect x="1132.5" y="777.85" width="14" height="7.5" rx="3" fill="#0000ff"/>
<rect x="1132.5" y="792.65" width="14" height="7.5" rx="3" fill="#0000ff"/>
<text transform="translate(1109,455.15) scale(0.62,1)" x="0 9.03226 18.0645" y="0" font-size="10.9" fill="#fff" stroke="#fff" stroke-width="0.28">SW8</text>
<text transform="translate(1109,503.35) scale(0.62,1)" x="0 9.03226 18.0645" y="0" font-size="10.9" fill="#fff" stroke="#fff" stroke-width="0.28">SW7</text>
<text transform="translate(1109,546.35) scale(0.62,1)" x="0 9.03226 18.0645" y="0" font-size="10.9" fill="#fff" stroke="#fff" stroke-width="0.28">SW6</text>
<text transform="translate(1109,591.85) scale(0.62,1)" x="0 9.03226 18.0645" y="0" font-size="10.9" fill="#fff" stroke="#fff" stroke-width="0.28">SW5</text>
<text transform="translate(1109,636.55) scale(0.62,1)" x="0 9.03226 18.0645" y="0" font-size="10.9" fill="#fff" stroke="#fff" stroke-width="0.28">SW4</text>
<text transform="translate(1109,679.15) scale(0.62,1)" x="0 9.03226 18.0645" y="0" font-size="10.9" fill="#fff" stroke="#fff" stroke-width="0.28">SW3</text>
<text transform="translate(1109,725.95) scale(0.62,1)" x="0 9.03226 18.0645" y="0" font-size="10.9" fill="#fff" stroke="#fff" stroke-width="0.28">SW2</text>
<text transform="translate(1109,769.45) scale(0.62,1)" x="0 9.03226 18.0645" y="0" font-size="10.9" fill="#fff" stroke="#fff" stroke-width="0.28">SW1</text>
<path d="M753.5,549.5 L768.6,549.5 L774.5,555 L774.5,593.5 L753.5,593.5 Z" fill="none" stroke="#ffffff" stroke-width="1" />
<rect x="753" y="570" width="22" height="1" fill="#ffffff" shape-rendering="crispEdges"/>
<circle cx="763.8" cy="559.9" r="8.6" fill="#000" />
<circle cx="762.8" cy="558.9" r="8.4" fill="#0000ff" />
<circle cx="762.8" cy="558.9" r="7.6" fill="none" stroke="#7000a0" stroke-width="0.8"/>
<ellipse cx="762.8" cy="558.9" rx="4.6" ry="4.2" fill="#000080" />
<circle cx="763.8" cy="582" r="8.6" fill="#000" />
<circle cx="762.8" cy="581" r="8.4" fill="#0000ff" />
<circle cx="762.8" cy="581" r="7.6" fill="none" stroke="#7000a0" stroke-width="0.8"/>
<ellipse cx="762.8" cy="581" rx="4.6" ry="4.2" fill="#000080" />
<text transform="translate(742.5,544.15) scale(0.62,1)" x="0 9.03226" y="0" font-size="10.9" fill="#fff" stroke="#fff" stroke-width="0.28">J1</text>
<path d="M758.3,539.5 L767.3,539.5 L762.8,546.8 Z" fill="none" stroke="#ffffff" stroke-width="1" />
<path d="M753.5,606.5 L768.6,606.5 L774.5,612 L774.5,673.5 L753.5,673.5 Z" fill="none" stroke="#ffffff" stroke-width="1" />
<rect x="753" y="628" width="22" height="1" fill="#ffffff" shape-rendering="crispEdges"/>
<rect x="753" y="650" width="22" height="1" fill="#ffffff" shape-rendering="crispEdges"/>
<circle cx="763.8" cy="617.2" r="8.6" fill="#000" />
<circle cx="762.8" cy="616.2" r="8.4" fill="#0000ff" />
<circle cx="762.8" cy="616.2" r="7.6" fill="none" stroke="#7000a0" stroke-width="0.8"/>
<ellipse cx="762.8" cy="616.2" rx="4.6" ry="4.2" fill="#000080" />
<circle cx="763.8" cy="639.9" r="8.6" fill="#000" />
<circle cx="762.8" cy="638.9" r="8.4" fill="#ff0000" />
<circle cx="763.8" cy="662" r="8.6" fill="#000" />
<circle cx="762.8" cy="661" r="8.4" fill="#0000ff" />
<circle cx="762.8" cy="661" r="7.6" fill="none" stroke="#7000a0" stroke-width="0.8"/>
<ellipse cx="762.8" cy="661" rx="4.6" ry="4.2" fill="#000080" />
<text transform="translate(742.5,623.55) scale(0.62,1)" x="0 9.03226" y="0" font-size="10.9" fill="#fff" stroke="#fff" stroke-width="0.28">J2</text>
<path d="M758.3,596.2 L767.3,596.2 L762.8,603.6 Z" fill="none" stroke="#ffffff" stroke-width="1" />
<path d="M752.5,694.5 L773.5,694.5 L773.5,781 L759,781 L752.5,774 Z" fill="none" stroke="#ffffff" stroke-width="1" />
<rect x="752" y="716" width="22" height="1" fill="#ffffff" shape-rendering="crispEdges"/>
<rect x="752" y="738" width="22" height="1" fill="#ffffff" shape-rendering="crispEdges"/>
<rect x="752" y="760" width="22" height="1" fill="#ffffff" shape-rendering="crispEdges"/>
<circle cx="763" cy="705.1" r="8.6" fill="#000" />
<circle cx="762" cy="704.1" r="8.4" fill="#0000ff" />
<circle cx="762" cy="704.1" r="7.6" fill="none" stroke="#7000a0" stroke-width="0.8"/>
<ellipse cx="762" cy="704.1" rx="4.6" ry="4.2" fill="#000080" />
<circle cx="763" cy="726.2" r="8.6" fill="#000" />
<circle cx="762" cy="725.2" r="8.4" fill="#0000ff" />
<circle cx="762" cy="725.2" r="7.6" fill="none" stroke="#7000a0" stroke-width="0.8"/>
<ellipse cx="762" cy="725.2" rx="4.6" ry="4.2" fill="#000080" />
<circle cx="763" cy="749.4" r="8.6" fill="#000" />
<circle cx="762" cy="748.4" r="8.4" fill="#0000ff" />
<circle cx="762" cy="748.4" r="7.6" fill="none" stroke="#7000a0" stroke-width="0.8"/>
<ellipse cx="762" cy="748.4" rx="4.6" ry="4.2" fill="#000080" />
<circle cx="763" cy="771.8" r="8.6" fill="#000" />
<circle cx="762" cy="770.8" r="8.4" fill="#0000ff" />
<circle cx="762" cy="770.8" r="7.6" fill="none" stroke="#7000a0" stroke-width="0.8"/>
<ellipse cx="762" cy="770.8" rx="4.6" ry="4.2" fill="#000080" />
<path d="M760.6,793 L769.6,793 L765.1,784.3 Z" fill="none" stroke="#ffffff" stroke-width="1" />
<text transform="translate(761,802.15) scale(0.62,1)" x="0 9.03226" y="0" font-size="10.9" fill="#fff" stroke="#fff" stroke-width="0.28">J4</text>
<path d="M1034.5,685.5 L1056.5,685.5 L1056.5,773.5 L1041,773.5 L1034.5,767 Z" fill="#800000" stroke="none" stroke-width="1" />
<path d="M1034.5,685.5 L1056.5,685.5 L1056.5,773.5 L1041,773.5 L1034.5,767 Z" fill="none" stroke="#ffffff" stroke-width="1" />
<rect x="1034" y="707" width="23" height="1" fill="#ffffff" shape-rendering="crispEdges"/>
<rect x="1034" y="730" width="23" height="1" fill="#ffffff" shape-rendering="crispEdges"/>
<rect x="1034" y="752" width="23" height="1" fill="#ffffff" shape-rendering="crispEdges"/>
<circle cx="1046" cy="696.2" r="8.6" fill="#000" />
<circle cx="1045" cy="695.2" r="8.4" fill="#0000ff" />
<circle cx="1045" cy="695.2" r="7.6" fill="none" stroke="#7000a0" stroke-width="0.8"/>
<ellipse cx="1045" cy="695.2" rx="4.6" ry="4.2" fill="#000080" />
<circle cx="1046" cy="718.7" r="8.6" fill="#000" />
<circle cx="1045" cy="717.7" r="8.4" fill="#0000ff" />
<circle cx="1045" cy="717.7" r="7.6" fill="none" stroke="#7000a0" stroke-width="0.8"/>
<ellipse cx="1045" cy="717.7" rx="4.6" ry="4.2" fill="#000080" />
<circle cx="1046" cy="741" r="8.6" fill="#000" />
<circle cx="1045" cy="740" r="8.4" fill="#0000ff" />
<circle cx="1045" cy="740" r="7.6" fill="none" stroke="#7000a0" stroke-width="0.8"/>
<ellipse cx="1045" cy="740" rx="4.6" ry="4.2" fill="#000080" />
<circle cx="1046" cy="762.7" r="8.6" fill="#000" />
<circle cx="1045" cy="761.7" r="8.4" fill="#0000ff" />
<circle cx="1045" cy="761.7" r="7.6" fill="none" stroke="#7000a0" stroke-width="0.8"/>
<ellipse cx="1045" cy="761.7" rx="4.6" ry="4.2" fill="#000080" />
<path d="M1042.8,783.5 L1051.8,783.5 L1047.3,775.5 Z" fill="none" stroke="#ffffff" stroke-width="1" />
<text transform="translate(1043.5,793.95) scale(0.62,1)" x="0 9.03226" y="0" font-size="10.9" fill="#fff" stroke="#fff" stroke-width="0.28">J3</text>
<text transform="translate(1035,682.15) scale(0.62,1)" x="0 9.03226 18.0645 27.0968" y="0" font-size="10.9" fill="#fff" stroke="#fff" stroke-width="0.28">ACTI</text>
<rect x="785" y="552" width="16" height="31" fill="#800000" />
<rect x="785.5" y="552.5" width="16" height="31" fill="none" stroke="#ffffff" stroke-width="1"/>
<rect x="785" y="567" width="16" height="1" fill="#ffffff" shape-rendering="crispEdges"/>
<rect x="787.8" y="553.4" width="10" height="10" rx="4" fill="#0000ff"/>
<rect x="787.8" y="569.2" width="10" height="10" rx="4" fill="#0000ff"/>
<text transform="translate(788.6,548.95) scale(0.62,1)" x="0 9.03226" y="0" font-size="10.9" fill="#fff" stroke="#fff" stroke-width="0.28">C4</text>
<rect x="813" y="547" width="12" height="26" fill="#800000" />
<rect x="814" y="548.95" width="10" height="5.3" rx="2.12" fill="#0000ff"/>
<rect x="814" y="556.75" width="10" height="5.3" rx="2.12" fill="#0000ff"/>
<rect x="814" y="564.35" width="10" height="5.3" rx="2.12" fill="#0000ff"/>
<ellipse cx="843.3" cy="551.6" rx="7.5" ry="5" fill="#800000" />
<ellipse cx="843.3" cy="567" rx="7.5" ry="5" fill="#800000" />
<rect x="838.3" y="548.95" width="10" height="5.3" rx="2.12" fill="#0000ff"/>
<rect x="838.3" y="564.35" width="10" height="5.3" rx="2.12" fill="#0000ff"/>
<rect x="827.5" y="547.5" width="8" height="26" fill="none" stroke="#ffffff" stroke-width="1"/>
<path d="M807.5,547.5 L811,551 L807.5,554.5 Z" fill="none" stroke="#ffffff" stroke-width="1" />
<text transform="translate(850.6,562.55) scale(0.62,1)" x="0 9.03226" y="0" font-size="10.9" fill="#fff" stroke="#fff" stroke-width="0.28">U1</text>
<rect x="811" y="575" width="31" height="16" fill="#800000" />
<rect x="811.5" y="575.5" width="31" height="16" fill="none" stroke="#ffffff" stroke-width="1"/>
<rect x="827" y="575" width="1" height="16" fill="#ffffff" shape-rendering="crispEdges"/>
<rect x="814.1" y="578.1" width="10" height="10" rx="4" fill="#0000ff"/>
<rect x="829.3" y="578.1" width="10" height="10" rx="4" fill="#0000ff"/>
<text transform="translate(844.3,586.15) scale(0.62,1)" x="0 9.03226" y="0" font-size="10.9" fill="#fff" stroke="#fff" stroke-width="0.28">C5</text>
<rect x="811" y="606.6" width="31" height="16" fill="#800000" />
<rect x="811.5" y="607.5" width="31" height="16" fill="none" stroke="#ffffff" stroke-width="1"/>
<rect x="827" y="607" width="1" height="16" fill="#ffffff" shape-rendering="crispEdges"/>
<rect x="814.1" y="609.1" width="10" height="10" rx="4" fill="#ff0000"/>
<rect x="829.3" y="609.1" width="10" height="10" rx="4" fill="#0000ff"/>
<text transform="translate(844.3,617.15) scale(0.62,1)" x="0 9.03226" y="0" font-size="10.9" fill="#fff" stroke="#fff" stroke-width="0.28">C6</text>
<circle cx="819.1" cy="600.7" r="5" fill="#000" />
<circle cx="819.1" cy="600.7" r="2.9" fill="#ff0000" />
<rect x="878" y="554" width="23" height="22" fill="#800000" />
<rect x="878.5" y="554.5" width="23" height="10" fill="none" stroke="#ffffff" stroke-width="1"/>
<rect x="878.5" y="564.5" width="23" height="12" fill="none" stroke="#ffffff" stroke-width="1"/>
<rect x="880.45" y="556.4" width="6.5" height="6" rx="2.4" fill="#0000ff"/>
<rect x="891.05" y="556.4" width="6.5" height="6" rx="2.4" fill="#0000ff"/>
<rect x="880.45" y="568.2" width="6.5" height="6" rx="2.4" fill="#0000ff"/>
<rect x="891.05" y="568.2" width="6.5" height="6" rx="2.4" fill="#0000ff"/>
<text transform="translate(862.7,562.15) scale(0.62,1)" x="0 9.03226 18.0645" y="0" font-size="10.9" fill="#fff" stroke="#fff" stroke-width="0.28">R10</text>
<text transform="translate(864.8,573.85) scale(0.62,1)" x="0 9.03226 18.0645" y="0" font-size="10.9" fill="#fff" stroke="#fff" stroke-width="0.28">R11</text>
<circle cx="905.2" cy="558.3" r="5" fill="#000" />
<circle cx="905.2" cy="558.3" r="2.9" fill="#d8c800" />
<circle cx="905.2" cy="558.3" r="1.3" fill="#c4c4d0" />
<circle cx="905.2" cy="570.6" r="5" fill="#000" />
<circle cx="905.2" cy="570.6" r="2.9" fill="#d8c800" />
<circle cx="905.2" cy="570.6" r="1.3" fill="#c4c4d0" />
<rect x="811.5" y="634.5" width="27" height="14" fill="none" stroke="#ffffff" stroke-width="1"/>
<rect x="813.3" y="635.8" width="9" height="10" rx="3.6" fill="#0000ff"/>
<rect x="826.7" y="635.8" width="9" height="10" rx="3.6" fill="#0000ff"/>
<text transform="translate(788.6,644.1) scale(0.62,1)" x="0 9.03226 18.0645 27.0968" y="0" font-size="10.9" fill="#fff" stroke="#fff" stroke-width="0.28">LED4</text>
<rect x="817" y="628" width="17" height="1" fill="#ffffff" shape-rendering="crispEdges"/>
<circle cx="824.9" cy="628.2" r="3.5" fill="none" stroke="#fff" stroke-width="1"/>
<rect x="840.5" y="635.5" width="23" height="11" fill="none" stroke="#ffffff" stroke-width="1"/>
<rect x="843.75" y="638.1" width="6.3" height="5.8" rx="2.32" fill="#0000ff"/>
<rect x="853.75" y="638.1" width="6.3" height="5.8" rx="2.32" fill="#0000ff"/>
<text transform="translate(848.5,632.45) scale(0.62,1)" x="0 9.03226" y="0" font-size="10.9" fill="#fff" stroke="#fff" stroke-width="0.28">R7</text>
<rect x="811.5" y="659.5" width="27" height="15" fill="none" stroke="#ffffff" stroke-width="1"/>
<rect x="813.3" y="661.3" width="9" height="10" rx="3.6" fill="#0000ff"/>
<rect x="826.7" y="661.3" width="9" height="10" rx="3.6" fill="#0000ff"/>
<text transform="translate(788.6,669.65) scale(0.62,1)" x="0 9.03226 18.0645 27.0968" y="0" font-size="10.9" fill="#fff" stroke="#fff" stroke-width="0.28">LED3</text>
<rect x="817" y="654" width="17" height="1" fill="#ffffff" shape-rendering="crispEdges"/>
<circle cx="824.9" cy="654.5" r="3.5" fill="none" stroke="#fff" stroke-width="1"/>
<rect x="840.5" y="662.5" width="23" height="11" fill="none" stroke="#ffffff" stroke-width="1"/>
<rect x="843.75" y="663.4" width="6.3" height="5.8" rx="2.32" fill="#0000ff"/>
<rect x="853.75" y="663.4" width="6.3" height="5.8" rx="2.32" fill="#0000ff"/>
<text transform="translate(847,658.95) scale(0.62,1)" x="0 9.03226" y="0" font-size="10.9" fill="#fff" stroke="#fff" stroke-width="0.28">R6</text>
<rect x="811.5" y="686.5" width="27" height="14" fill="none" stroke="#ffffff" stroke-width="1"/>
<rect x="813.3" y="687.6" width="9" height="10" rx="3.6" fill="#0000ff"/>
<rect x="826.7" y="687.6" width="9" height="10" rx="3.6" fill="#0000ff"/>
<text transform="translate(788.6,696.45) scale(0.62,1)" x="0 9.03226 18.0645 27.0968" y="0" font-size="10.9" fill="#fff" stroke="#fff" stroke-width="0.28">LED2</text>
<rect x="817" y="680" width="17" height="1" fill="#ffffff" shape-rendering="crispEdges"/>
<circle cx="824.9" cy="680.5" r="3.5" fill="none" stroke="#fff" stroke-width="1"/>
<rect x="840.5" y="688.5" width="23" height="11" fill="none" stroke="#ffffff" stroke-width="1"/>
<rect x="843.75" y="690.2" width="6.3" height="5.8" rx="2.32" fill="#0000ff"/>
<rect x="853.75" y="690.2" width="6.3" height="5.8" rx="2.32" fill="#0000ff"/>
<text transform="translate(847,684.15) scale(0.62,1)" x="0 9.03226" y="0" font-size="10.9" fill="#fff" stroke="#fff" stroke-width="0.28">R5</text>
<rect x="811.5" y="712.5" width="27" height="15" fill="none" stroke="#ffffff" stroke-width="1"/>
<rect x="813.3" y="714.4" width="9" height="10" rx="3.6" fill="#0000ff"/>
<rect x="826.7" y="714.4" width="9" height="10" rx="3.6" fill="#0000ff"/>
<text transform="translate(788.6,722.75) scale(0.62,1)" x="0 9.03226 18.0645 27.0968" y="0" font-size="10.9" fill="#fff" stroke="#fff" stroke-width="0.28">LED1</text>
<rect x="817" y="706" width="17" height="1" fill="#ffffff" shape-rendering="crispEdges"/>
<circle cx="824.9" cy="706.4" r="3.5" fill="none" stroke="#fff" stroke-width="1"/>
<rect x="840.5" y="715.5" width="23" height="10" fill="none" stroke="#ffffff" stroke-width="1"/>
<rect x="843.75" y="715.9" width="6.3" height="5.8" rx="2.32" fill="#0000ff"/>
<rect x="853.75" y="715.9" width="6.3" height="5.8" rx="2.32" fill="#0000ff"/>
<text transform="translate(847,712.05) scale(0.62,1)" x="0 9.03226" y="0" font-size="10.9" fill="#fff" stroke="#fff" stroke-width="0.28">R4</text>
<rect x="789" y="733" width="12" height="22" fill="#800000" />
<rect x="789.5" y="733.5" width="11" height="22" fill="none" stroke="#ffffff" stroke-width="1"/>
<rect x="791.4" y="735.7" width="6" height="6" rx="2.4" fill="#0000ff"/>
<rect x="791.4" y="746.6" width="6" height="6" rx="2.4" fill="#0000ff"/>
<text transform="translate(788,765.15) scale(0.62,1)" x="0 9.03226 18.0645" y="0" font-size="10.9" fill="#fff" stroke="#fff" stroke-width="0.28">R21</text>
<rect x="939.3" y="615.2" width="50.5" height="50.5" fill="#0000ff" />
<rect x="941" y="606" width="1.2" height="6.6" fill="#0000ff" />
<rect x="941" y="669.2" width="1.2" height="6.1" fill="#0000ff" />
<rect x="929.2" y="615.3" width="7" height="1.2" fill="#0000ff" />
<rect x="992.4" y="615.3" width="6.1" height="1.2" fill="#0000ff" />
<rect x="945.3" y="606" width="1.2" height="6.6" fill="#ff0000" />
<rect x="945.3" y="669.2" width="1.2" height="6.1" fill="#0000ff" />
<rect x="929.2" y="619.4" width="7" height="1.2" fill="#0000ff" />
<rect x="992.4" y="619.4" width="6.1" height="1.2" fill="#0000ff" />
<rect x="949.6" y="606" width="1.2" height="6.6" fill="#0000ff" />
<rect x="949.6" y="669.2" width="1.2" height="6.1" fill="#ff0000" />
<rect x="929.2" y="623.5" width="7" height="1.2" fill="#0000ff" />
<rect x="992.4" y="623.5" width="6.1" height="1.2" fill="#0000ff" />
<rect x="953.9" y="606" width="1.2" height="6.6" fill="#0000ff" />
<rect x="953.9" y="669.2" width="1.2" height="6.1" fill="#0000ff" />
<rect x="929.2" y="627.6" width="7" height="1.2" fill="#0000ff" />
<rect x="992.4" y="627.6" width="6.1" height="1.2" fill="#0000ff" />
<rect x="958.2" y="606" width="1.2" height="6.6" fill="#0000ff" />
<rect x="958.2" y="669.2" width="1.2" height="6.1" fill="#0000ff" />
<rect x="929.2" y="631.7" width="7" height="1.2" fill="#0000ff" />
<rect x="992.4" y="631.7" width="6.1" height="1.2" fill="#0000ff" />
<rect x="962.5" y="606" width="1.2" height="6.6" fill="#0000ff" />
<rect x="962.5" y="669.2" width="1.2" height="6.1" fill="#0000ff" />
<rect x="929.2" y="635.8" width="7" height="1.2" fill="#0000ff" />
<rect x="992.4" y="635.8" width="6.1" height="1.2" fill="#0000ff" />
<rect x="966.8" y="606" width="1.2" height="6.6" fill="#0000ff" />
<rect x="966.8" y="669.2" width="1.2" height="6.1" fill="#0000ff" />
<rect x="929.2" y="639.9" width="7" height="1.2" fill="#0000ff" />
<rect x="992.4" y="639.9" width="6.1" height="1.2" fill="#ff0000" />
<rect x="971.1" y="606" width="1.2" height="6.6" fill="#0000ff" />
<rect x="971.1" y="669.2" width="1.2" height="6.1" fill="#0000ff" />
<rect x="929.2" y="644" width="7" height="1.2" fill="#0000ff" />
<rect x="992.4" y="644" width="6.1" height="1.2" fill="#0000ff" />
<rect x="975.4" y="606" width="1.2" height="6.6" fill="#0000ff" />
<rect x="975.4" y="669.2" width="1.2" height="6.1" fill="#0000ff" />
<rect x="929.2" y="648.1" width="7" height="1.2" fill="#ff0000" />
<rect x="992.4" y="648.1" width="6.1" height="1.2" fill="#0000ff" />
<rect x="979.7" y="606" width="1.2" height="6.6" fill="#0000ff" />
<rect x="979.7" y="669.2" width="1.2" height="6.1" fill="#0000ff" />
<rect x="929.2" y="652.2" width="7" height="1.2" fill="#0000ff" />
<rect x="992.4" y="652.2" width="6.1" height="1.2" fill="#0000ff" />
<rect x="984" y="606" width="1.2" height="6.6" fill="#0000ff" />
<rect x="984" y="669.2" width="1.2" height="6.1" fill="#0000ff" />
<rect x="929.2" y="656.3" width="7" height="1.2" fill="#0000ff" />
<rect x="992.4" y="656.3" width="6.1" height="1.2" fill="#0000ff" />
<rect x="988.3" y="606" width="1.2" height="6.6" fill="#0000ff" />
<rect x="988.3" y="669.2" width="1.2" height="6.1" fill="#0000ff" />
<rect x="929.2" y="660.4" width="7" height="1.2" fill="#0000ff" />
<rect x="992.4" y="660.4" width="6.1" height="1.2" fill="#0000ff" />
<path d="M930,614 L930,611 L936,605.5" fill="none" stroke="#ffffff" stroke-width="1" />
<path d="M993,605.5 L999.5,605.5 L999.5,612" fill="none" stroke="#ffffff" stroke-width="1" />
<path d="M930.5,668 L930.5,675.5 L937,675.5" fill="none" stroke="#ffffff" stroke-width="1" />
<path d="M999.5,668 L999.5,675.5 L993,675.5" fill="none" stroke="#ffffff" stroke-width="1" />
<text transform="translate(909,619.65) scale(0.62,1)" x="0 9.03226" y="0" font-size="10.9" fill="#fff" stroke="#fff" stroke-width="0.28">U2</text>
<path d="M923,613.5 L926.5,616.5 L923,619.5 Z" fill="none" stroke="#ffffff" stroke-width="1" />
<rect x="925" y="586" width="22" height="13" fill="#800000" />
<rect x="925.5" y="586.5" width="22" height="13" fill="none" stroke="#ffffff" stroke-width="1"/>
<rect x="936" y="586" width="1" height="13" fill="#ffffff" shape-rendering="crispEdges"/>
<rect x="927.45" y="588.5" width="7.5" height="8" rx="3" fill="#0000ff"/>
<rect x="937.45" y="588.5" width="7.5" height="8" rx="3" fill="#ff0000"/>
<text transform="translate(924.3,576.45) scale(0.62,1)" x="0 9.03226 18.0645" y="0" font-size="10.9" fill="#fff" stroke="#fff" stroke-width="0.28">C15</text>
<circle cx="940.4" cy="580.5" r="5" fill="#000" />
<circle cx="940.4" cy="580.5" r="2.9" fill="#ff0000" />
<circle cx="1044.8" cy="594.3" r="7.3" fill="none" stroke="#fff" stroke-width="1.2"/>
<circle cx="1044.8" cy="594.3" r="5.8" fill="#0000ff" />
<text transform="translate(1033,582.15) scale(0.62,1)" x="0 9.03226 18.0645 27.0968" y="0" font-size="10.9" fill="#fff" stroke="#fff" stroke-width="0.28">WAKE</text>
<circle cx="1045.9" cy="660.8" r="7.3" fill="none" stroke="#fff" stroke-width="1.2"/>
<circle cx="1045.9" cy="660.8" r="5.8" fill="#0000ff" />
<rect x="1016.5" y="628.5" width="13" height="22" fill="none" stroke="#ffffff" stroke-width="1"/>
<rect x="1016" y="639" width="13" height="1" fill="#ffffff" shape-rendering="crispEdges"/>
<rect x="1018.2" y="630.5" width="8" height="7" rx="2.8" fill="#0000ff"/>
<rect x="1018.2" y="640.8" width="8" height="7" rx="2.8" fill="#ff0000"/>
<text transform="translate(1016,624.95) scale(0.62,1)" x="0 9.03226 18.0645" y="0" font-size="10.9" fill="#fff" stroke="#fff" stroke-width="0.28">C14</text>
<rect x="1038.5" y="628.5" width="13" height="22" fill="none" stroke="#ffffff" stroke-width="1"/>
<rect x="1038" y="639" width="13" height="1" fill="#ffffff" shape-rendering="crispEdges"/>
<rect x="1040.8" y="630.5" width="8" height="7" rx="2.8" fill="#0000ff"/>
<rect x="1040.8" y="640.8" width="8" height="7" rx="2.8" fill="#0000ff"/>
<text transform="translate(1037,624.95) scale(0.62,1)" x="0 9.03226 18.0645" y="0" font-size="10.9" fill="#fff" stroke="#fff" stroke-width="0.28">C18</text>
<circle cx="1032.6" cy="643.7" r="5" fill="#000" />
<circle cx="1032.6" cy="643.7" r="2.9" fill="#ff0000" />
<rect x="887" y="645" width="13" height="21" fill="#800000" />
<rect x="887.5" y="645.5" width="13" height="21" fill="none" stroke="#ffffff" stroke-width="1"/>
<rect x="887" y="656" width="13" height="1" fill="#ffffff" shape-rendering="crispEdges"/>
<rect x="889.5" y="647.4" width="8" height="7" rx="2.8" fill="#0000ff"/>
<rect x="889.5" y="657.3" width="8" height="7" rx="2.8" fill="#0000ff"/>
<text transform="translate(887,675.45) scale(0.62,1)" x="0 9.03226 18.0645" y="0" font-size="10.9" fill="#fff" stroke="#fff" stroke-width="0.28">C19</text>
<rect x="908" y="645" width="14" height="21" fill="#800000" />
<rect x="908.5" y="645.5" width="14" height="21" fill="none" stroke="#ffffff" stroke-width="1"/>
<rect x="908" y="656" width="14" height="1" fill="#ffffff" shape-rendering="crispEdges"/>
<rect x="911" y="647.4" width="8" height="7" rx="2.8" fill="#ff0000"/>
<rect x="911" y="657.3" width="8" height="7" rx="2.8" fill="#0000ff"/>
<text transform="translate(908,675.45) scale(0.62,1)" x="0 9.03226 18.0645" y="0" font-size="10.9" fill="#fff" stroke="#fff" stroke-width="0.28">C12</text>
<circle cx="903.2" cy="650.1" r="2.8" fill="#ff0000" />
<rect x="937.5" y="684.5" width="22" height="13" fill="none" stroke="#ffffff" stroke-width="1"/>
<rect x="948" y="684" width="1" height="13" fill="#ffffff" shape-rendering="crispEdges"/>
<rect x="939.6" y="685.7" width="8" height="8" rx="3.2" fill="#ff0000"/>
<rect x="948.5" y="685.7" width="8" height="8" rx="3.2" fill="#0000ff"/>
<text transform="translate(921.5,692.65) scale(0.62,1)" x="0 9.03226 18.0645" y="0" font-size="10.9" fill="#fff" stroke="#fff" stroke-width="0.28">C13</text>
<circle cx="942.5" cy="700.5" r="2.8" fill="#ff0000" />
<rect x="912" y="707" width="14" height="22" fill="#800000" />
<rect x="912.5" y="708.5" width="14" height="21" fill="none" stroke="#ffffff" stroke-width="1"/>
<rect x="912" y="718" width="14" height="1" fill="#ffffff" shape-rendering="crispEdges"/>
<rect x="914.9" y="709.9" width="8" height="7" rx="2.8" fill="#0000ff"/>
<rect x="914.9" y="719.6" width="8" height="7" rx="2.8" fill="#0000ff"/>
<text transform="translate(913,705.05) scale(0.62,1)" x="0 9.03226 18.0645" y="0" font-size="10.9" fill="#fff" stroke="#fff" stroke-width="0.28">C21</text>
<rect x="927" y="708" width="22" height="10" fill="#800000" />
<rect x="927.5" y="708.5" width="22" height="10" fill="none" stroke="#ffffff" stroke-width="1"/>
<rect x="930.1" y="710.4" width="6" height="6" rx="2.4" fill="#0000ff"/>
<rect x="940.1" y="710.4" width="6" height="6" rx="2.4" fill="#ff0000"/>
<text transform="translate(931.8,727.35) scale(0.62,1)" x="0 9.03226 18.0645" y="0" font-size="10.9" fill="#fff" stroke="#fff" stroke-width="0.28">R20</text>
<rect x="973" y="707" width="14" height="22" fill="#800000" />
<rect x="973.5" y="708.5" width="14" height="21" fill="none" stroke="#ffffff" stroke-width="1"/>
<rect x="973" y="718" width="14" height="1" fill="#ffffff" shape-rendering="crispEdges"/>
<rect x="975.9" y="709.9" width="8" height="7" rx="2.8" fill="#0000ff"/>
<rect x="975.9" y="719.6" width="8" height="7" rx="2.8" fill="#0000ff"/>
<text transform="translate(972,705.05) scale(0.62,1)" x="0 9.03226 18.0645" y="0" font-size="10.9" fill="#fff" stroke="#fff" stroke-width="0.28">C25</text>
<rect x="913" y="744" width="23" height="12" fill="#800000" />
<rect x="913.5" y="744.5" width="23" height="12" fill="none" stroke="#ffffff" stroke-width="1"/>
<rect x="915.65" y="746.2" width="6.5" height="6" rx="2.4" fill="#0000ff"/>
<rect x="926.15" y="746.2" width="6.5" height="6" rx="2.4" fill="#0000ff"/>
<text transform="translate(919.9,763.55) scale(0.62,1)" x="0 9.03226" y="0" font-size="10.9" fill="#fff" stroke="#fff" stroke-width="0.28">R9</text>
<rect x="950" y="744" width="23" height="12" fill="#800000" />
<rect x="950.5" y="744.5" width="23" height="12" fill="none" stroke="#ffffff" stroke-width="1"/>
<rect x="952.75" y="746.2" width="6.5" height="6" rx="2.4" fill="#0000ff"/>
<rect x="963.25" y="746.2" width="6.5" height="6" rx="2.4" fill="#0000ff"/>
<text transform="translate(956.7,763.75) scale(0.62,1)" x="0 9.03226" y="0" font-size="10.9" fill="#fff" stroke="#fff" stroke-width="0.28">R8</text>
<path d="M987,817 L976,822.7 L926,822.7 Q921,824 921,829 L921,853" fill="none" stroke="#008000" stroke-width="4" />
<path d="M870.8,918 L865.6,911 L865.6,862 L880,846.4 L990,846.4 L997,853" fill="none" stroke="#800000" stroke-width="4" />
<path d="M921,853.3 L879,853.3 L870.8,861.3 L870.8,985" fill="none" stroke="#008000" stroke-width="4" />
<path d="M870.8,917.8 L890,917.8" fill="none" stroke="#008000" stroke-width="4" />
<path d="M1019,853 L1033,856 L1033,911.7 L1026.5,917.8 L1013,917.8" fill="none" stroke="#008000" stroke-width="4" />
<path d="M1013,958.3 L1035,958.3" fill="none" stroke="#008000" stroke-width="4" />
<path d="M932,877 L932,859" fill="none" stroke="#008000" stroke-width="4" />
<path d="M1040,875 L990,826" fill="none" stroke="#800000" stroke-width="1" />
<path d="M1039.6,875 L1039.6,946" fill="none" stroke="#800000" stroke-width="1" />
<path d="M1002.3,810 L1002.3,826 L990,838 L938,838" fill="none" stroke="#008000" stroke-width="1" />
<path d="M1008.8,810 L1008.8,822 L1019,832.4 L1019,835" fill="none" stroke="#008000" stroke-width="1" />
<rect x="920.6" y="838" width="3" height="15" fill="#008000" />
<rect x="930.3" y="838" width="3" height="15" fill="#008000" />
<rect x="1007.1" y="839" width="3" height="14" fill="#008000" />
<rect x="1017.1" y="839" width="3" height="14" fill="#008000" />
<rect x="1038.7" y="958" width="3" height="16" fill="#008000" />
<rect x="1048.7" y="958" width="3" height="16" fill="#008000" />
<rect x="916.5" y="833.5" width="21" height="11" fill="none" stroke="#ffffff" stroke-width="1"/>
<rect x="919.1" y="835.4" width="6" height="6" rx="2.4" fill="#0000ff"/>
<rect x="928.8" y="835.4" width="6" height="6" rx="2.4" fill="#0000ff"/>
<text transform="translate(939.8,841.15) scale(0.62,1)" x="0 9.03226 18.0645" y="0" font-size="10.9" fill="#fff" stroke="#fff" stroke-width="0.28">R24</text>
<rect x="916.5" y="847.5" width="21" height="12" fill="none" stroke="#ffffff" stroke-width="1"/>
<rect x="927" y="847" width="1" height="13" fill="#ffffff" shape-rendering="crispEdges"/>
<rect x="918.1" y="849.3" width="8" height="8" rx="3.2" fill="#0000ff"/>
<rect x="927.4" y="849.3" width="8" height="8" rx="3.2" fill="#0000ff"/>
<text transform="translate(939.8,856.15) scale(0.62,1)" x="0 9.03226 18.0645" y="0" font-size="10.9" fill="#fff" stroke="#fff" stroke-width="0.28">C22</text>
<rect x="1002.5" y="834.5" width="23" height="11" fill="none" stroke="#ffffff" stroke-width="1"/>
<rect x="1005.4" y="836.5" width="6" height="6" rx="2.4" fill="#0000ff"/>
<rect x="1015.5" y="836.5" width="6" height="6" rx="2.4" fill="#0000ff"/>
<text transform="translate(1026.5,842.65) scale(0.62,1)" x="0 9.03226 18.0645" y="0" font-size="10.9" fill="#fff" stroke="#fff" stroke-width="0.28">R23</text>
<rect x="1003.5" y="847.5" width="22" height="12" fill="none" stroke="#ffffff" stroke-width="1"/>
<rect x="1014" y="847" width="1" height="13" fill="#ffffff" shape-rendering="crispEdges"/>
<rect x="1005.1" y="848.9" width="8" height="8" rx="3.2" fill="#0000ff"/>
<rect x="1014.7" y="848.9" width="8" height="8" rx="3.2" fill="#0000ff"/>
<text transform="translate(1026.5,855.15) scale(0.62,1)" x="0 9.03226 18.0645" y="0" font-size="10.9" fill="#fff" stroke="#fff" stroke-width="0.28">C24</text>
<rect x="1034.5" y="954.5" width="22" height="10" fill="none" stroke="#ffffff" stroke-width="1"/>
<rect x="1037" y="955.3" width="6" height="6" rx="2.4" fill="#0000ff"/>
<rect x="1046.9" y="955.3" width="6" height="6" rx="2.4" fill="#0000ff"/>
<text transform="translate(1059.2,962.15) scale(0.62,1)" x="0 9.03226 18.0645" y="0" font-size="10.9" fill="#fff" stroke="#fff" stroke-width="0.28">R22</text>
<rect x="1034.5" y="968.5" width="22" height="17" fill="none" stroke="#ffffff" stroke-width="1"/>
<rect x="1045" y="968" width="1" height="17" fill="#ffffff" shape-rendering="crispEdges"/>
<rect x="1036.5" y="970.1" width="8" height="8" rx="3.2" fill="#0000ff"/>
<rect x="1046.4" y="970.1" width="8" height="8" rx="3.2" fill="#0000ff"/>
<text transform="translate(1059.2,977.15) scale(0.62,1)" x="0 9.03226 18.0645" y="0" font-size="10.9" fill="#fff" stroke="#fff" stroke-width="0.28">C23</text>
<path d="M989,823.7 h2.4 l1.5,1.5 v2.4 l-1.5,1.5 h-2.4 l-1.5,-1.5 v-2.4 z" fill="#d8c800"/>
<circle cx="990.2" cy="826.4" r="1.5" fill="#c4c4d0" />
<path d="M995.1,849.8 h2.4 l1.5,1.5 v2.4 l-1.5,1.5 h-2.4 l-1.5,-1.5 v-2.4 z" fill="#d8c800"/>
<circle cx="996.3" cy="852.5" r="1.5" fill="#c4c4d0" />
<path d="M869.6,915.1 h2.4 l1.5,1.5 v2.4 l-1.5,1.5 h-2.4 l-1.5,-1.5 v-2.4 z" fill="#d8c800"/>
<circle cx="870.8" cy="917.8" r="1.5" fill="#c4c4d0" />
<path d="M1038,943.7 h2.4 l1.5,1.5 v2.4 l-1.5,1.5 h-2.4 l-1.5,-1.5 v-2.4 z" fill="#d8c800"/>
<circle cx="1039.2" cy="946.4" r="1.5" fill="#c4c4d0" />
<rect x="885.5" y="872.5" width="134" height="128" fill="none" stroke="#ffffff" stroke-width="1"/>
<text transform="translate(885.7,868.75) scale(0.62,1)" x="0 9.03226 18.0645" y="0" font-size="10.9" fill="#fff" stroke="#fff" stroke-width="0.28">ANT</text>
<text transform="translate(927.7,868.75) scale(0.62,1)" x="0" y="0" font-size="10.9" fill="#fff" stroke="#fff" stroke-width="0.28">5</text>
<text transform="translate(968.7,868.75) scale(0.62,1)" x="0" y="0" font-size="10.9" fill="#fff" stroke="#fff" stroke-width="0.28">6</text>
<rect x="919.3" y="877.15" width="26" height="18.7" rx="9.35" fill="#0000ff" stroke="#ff9090" stroke-width="0.8" stroke-dasharray="2 2"/>
<rect x="958.5" y="877.15" width="26" height="18.7" rx="9.35" fill="#0000ff" stroke="#ff9090" stroke-width="0.8" stroke-dasharray="2 2"/>
<rect x="889.95" y="906.5" width="18.7" height="26" rx="9.35" fill="#0000ff" stroke="#ff9090" stroke-width="0.8" stroke-dasharray="2 2"/>
<rect x="889.95" y="945.3" width="18.7" height="26" rx="9.35" fill="#0000ff" stroke="#ff9090" stroke-width="0.8" stroke-dasharray="2 2"/>
<rect x="994.75" y="906.5" width="18.7" height="26" rx="9.35" fill="#0000ff" stroke="#ff9090" stroke-width="0.8" stroke-dasharray="2 2"/>
<rect x="994.75" y="945.3" width="18.7" height="26" rx="9.35" fill="#0000ff" stroke="#ff9090" stroke-width="0.8" stroke-dasharray="2 2"/>
<text transform="translate(878,926.95) scale(0.62,1)" x="0" y="0" font-size="10.9" fill="#fff" stroke="#fff" stroke-width="0.28">4</text>
<text transform="translate(878,966.15) scale(0.62,1)" x="0" y="0" font-size="10.9" fill="#fff" stroke="#fff" stroke-width="0.28">3</text>
<text transform="translate(1022,926.95) scale(0.62,1)" x="0" y="0" font-size="10.9" fill="#fff" stroke="#fff" stroke-width="0.28">7</text>
<text transform="translate(1022,966.15) scale(0.62,1)" x="0" y="0" font-size="10.9" fill="#fff" stroke="#fff" stroke-width="0.28">8</text>
<path d="M757.2,298.7 h2.4 l1.5,1.5 v2.4 l-1.5,1.5 h-2.4 l-1.5,-1.5 v-2.4 z" fill="#d8c800"/>
<circle cx="758.4" cy="301.4" r="1.5" fill="#c4c4d0" />
<path d="M742.3,350.1 h2.4 l1.5,1.5 v2.4 l-1.5,1.5 h-2.4 l-1.5,-1.5 v-2.4 z" fill="#d8c800"/>
<circle cx="743.5" cy="352.8" r="1.5" fill="#c4c4d0" />
<path d="M743.5,397.3 h2.4 l1.5,1.5 v2.4 l-1.5,1.5 h-2.4 l-1.5,-1.5 v-2.4 z" fill="#d8c800"/>
<circle cx="744.7" cy="400" r="1.5" fill="#c4c4d0" />
<path d="M779.8,416.9 h2.4 l1.5,1.5 v2.4 l-1.5,1.5 h-2.4 l-1.5,-1.5 v-2.4 z" fill="#d8c800"/>
<circle cx="781" cy="419.6" r="1.5" fill="#c4c4d0" />
<path d="M794.3,416.9 h2.4 l1.5,1.5 v2.4 l-1.5,1.5 h-2.4 l-1.5,-1.5 v-2.4 z" fill="#d8c800"/>
<circle cx="795.5" cy="419.6" r="1.5" fill="#c4c4d0" />
<path d="M873.5,339.2 h2.4 l1.5,1.5 v2.4 l-1.5,1.5 h-2.4 l-1.5,-1.5 v-2.4 z" fill="#d8c800"/>
<circle cx="874.7" cy="341.9" r="1.5" fill="#c4c4d0" />
<path d="M873.5,401.5 h2.4 l1.5,1.5 v2.4 l-1.5,1.5 h-2.4 l-1.5,-1.5 v-2.4 z" fill="#d8c800"/>
<circle cx="874.7" cy="404.2" r="1.5" fill="#c4c4d0" />
<path d="M896.8,434.8 h2.4 l1.5,1.5 v2.4 l-1.5,1.5 h-2.4 l-1.5,-1.5 v-2.4 z" fill="#d8c800"/>
<circle cx="898" cy="437.5" r="1.5" fill="#c4c4d0" />
<path d="M966.8,391.3 h2.4 l1.5,1.5 v2.4 l-1.5,1.5 h-2.4 l-1.5,-1.5 v-2.4 z" fill="#d8c800"/>
<circle cx="968" cy="394" r="1.5" fill="#c4c4d0" />
<path d="M996.3,391.3 h2.4 l1.5,1.5 v2.4 l-1.5,1.5 h-2.4 l-1.5,-1.5 v-2.4 z" fill="#d8c800"/>
<circle cx="997.5" cy="394" r="1.5" fill="#c4c4d0" />
<path d="M1025.6,391.3 h2.4 l1.5,1.5 v2.4 l-1.5,1.5 h-2.4 l-1.5,-1.5 v-2.4 z" fill="#d8c800"/>
<circle cx="1026.8" cy="394" r="1.5" fill="#c4c4d0" />
<path d="M1055.8,391.3 h2.4 l1.5,1.5 v2.4 l-1.5,1.5 h-2.4 l-1.5,-1.5 v-2.4 z" fill="#d8c800"/>
<circle cx="1057" cy="394" r="1.5" fill="#c4c4d0" />
<path d="M966.8,406.3 h2.4 l1.5,1.5 v2.4 l-1.5,1.5 h-2.4 l-1.5,-1.5 v-2.4 z" fill="#d8c800"/>
<circle cx="968" cy="409" r="1.5" fill="#c4c4d0" />
<path d="M996.3,406.3 h2.4 l1.5,1.5 v2.4 l-1.5,1.5 h-2.4 l-1.5,-1.5 v-2.4 z" fill="#d8c800"/>
<circle cx="997.5" cy="409" r="1.5" fill="#c4c4d0" />
<path d="M1025.6,406.3 h2.4 l1.5,1.5 v2.4 l-1.5,1.5 h-2.4 l-1.5,-1.5 v-2.4 z" fill="#d8c800"/>
<circle cx="1026.8" cy="409" r="1.5" fill="#c4c4d0" />
<path d="M1055.8,406.3 h2.4 l1.5,1.5 v2.4 l-1.5,1.5 h-2.4 l-1.5,-1.5 v-2.4 z" fill="#d8c800"/>
<circle cx="1057" cy="409" r="1.5" fill="#c4c4d0" />
<path d="M966.8,421.3 h2.4 l1.5,1.5 v2.4 l-1.5,1.5 h-2.4 l-1.5,-1.5 v-2.4 z" fill="#d8c800"/>
<circle cx="968" cy="424" r="1.5" fill="#c4c4d0" />
<path d="M996.3,421.3 h2.4 l1.5,1.5 v2.4 l-1.5,1.5 h-2.4 l-1.5,-1.5 v-2.4 z" fill="#d8c800"/>
<circle cx="997.5" cy="424" r="1.5" fill="#c4c4d0" />
<path d="M1025.6,421.3 h2.4 l1.5,1.5 v2.4 l-1.5,1.5 h-2.4 l-1.5,-1.5 v-2.4 z" fill="#d8c800"/>
<circle cx="1026.8" cy="424" r="1.5" fill="#c4c4d0" />
<path d="M1055.8,421.3 h2.4 l1.5,1.5 v2.4 l-1.5,1.5 h-2.4 l-1.5,-1.5 v-2.4 z" fill="#d8c800"/>
<circle cx="1057" cy="424" r="1.5" fill="#c4c4d0" />
<path d="M966.8,436.3 h2.4 l1.5,1.5 v2.4 l-1.5,1.5 h-2.4 l-1.5,-1.5 v-2.4 z" fill="#d8c800"/>
<circle cx="968" cy="439" r="1.5" fill="#c4c4d0" />
<path d="M996.3,436.3 h2.4 l1.5,1.5 v2.4 l-1.5,1.5 h-2.4 l-1.5,-1.5 v-2.4 z" fill="#d8c800"/>
<circle cx="997.5" cy="439" r="1.5" fill="#c4c4d0" />
<path d="M1025.6,436.3 h2.4 l1.5,1.5 v2.4 l-1.5,1.5 h-2.4 l-1.5,-1.5 v-2.4 z" fill="#d8c800"/>
<circle cx="1026.8" cy="439" r="1.5" fill="#c4c4d0" />
<path d="M1055.8,436.3 h2.4 l1.5,1.5 v2.4 l-1.5,1.5 h-2.4 l-1.5,-1.5 v-2.4 z" fill="#d8c800"/>
<circle cx="1057" cy="439" r="1.5" fill="#c4c4d0" />
<path d="M1114.8,393.9 h2.4 l1.5,1.5 v2.4 l-1.5,1.5 h-2.4 l-1.5,-1.5 v-2.4 z" fill="#d8c800"/>
<circle cx="1116" cy="396.6" r="1.5" fill="#c4c4d0" />
<path d="M1146.4,393.9 h2.4 l1.5,1.5 v2.4 l-1.5,1.5 h-2.4 l-1.5,-1.5 v-2.4 z" fill="#d8c800"/>
<circle cx="1147.6" cy="396.6" r="1.5" fill="#c4c4d0" />
<path d="M1114.8,408.7 h2.4 l1.5,1.5 v2.4 l-1.5,1.5 h-2.4 l-1.5,-1.5 v-2.4 z" fill="#d8c800"/>
<circle cx="1116" cy="411.4" r="1.5" fill="#c4c4d0" />
<path d="M1146.4,408.7 h2.4 l1.5,1.5 v2.4 l-1.5,1.5 h-2.4 l-1.5,-1.5 v-2.4 z" fill="#d8c800"/>
<circle cx="1147.6" cy="411.4" r="1.5" fill="#c4c4d0" />
<path d="M1114.8,423.7 h2.4 l1.5,1.5 v2.4 l-1.5,1.5 h-2.4 l-1.5,-1.5 v-2.4 z" fill="#d8c800"/>
<circle cx="1116" cy="426.4" r="1.5" fill="#c4c4d0" />
<path d="M1146.4,423.7 h2.4 l1.5,1.5 v2.4 l-1.5,1.5 h-2.4 l-1.5,-1.5 v-2.4 z" fill="#d8c800"/>
<circle cx="1147.6" cy="426.4" r="1.5" fill="#c4c4d0" />
<path d="M772.3,456.6 h2.4 l1.5,1.5 v2.4 l-1.5,1.5 h-2.4 l-1.5,-1.5 v-2.4 z" fill="#d8c800"/>
<circle cx="773.5" cy="459.3" r="1.5" fill="#c4c4d0" />
<path d="M812.4,456.6 h2.4 l1.5,1.5 v2.4 l-1.5,1.5 h-2.4 l-1.5,-1.5 v-2.4 z" fill="#d8c800"/>
<circle cx="813.6" cy="459.3" r="1.5" fill="#c4c4d0" />
<path d="M847.5,456.6 h2.4 l1.5,1.5 v2.4 l-1.5,1.5 h-2.4 l-1.5,-1.5 v-2.4 z" fill="#d8c800"/>
<circle cx="848.7" cy="459.3" r="1.5" fill="#c4c4d0" />
<path d="M884.1,456.6 h2.4 l1.5,1.5 v2.4 l-1.5,1.5 h-2.4 l-1.5,-1.5 v-2.4 z" fill="#d8c800"/>
<circle cx="885.3" cy="459.3" r="1.5" fill="#c4c4d0" />
<path d="M921.1,456.6 h2.4 l1.5,1.5 v2.4 l-1.5,1.5 h-2.4 l-1.5,-1.5 v-2.4 z" fill="#d8c800"/>
<circle cx="922.3" cy="459.3" r="1.5" fill="#c4c4d0" />
<path d="M958.1,456.6 h2.4 l1.5,1.5 v2.4 l-1.5,1.5 h-2.4 l-1.5,-1.5 v-2.4 z" fill="#d8c800"/>
<circle cx="959.3" cy="459.3" r="1.5" fill="#c4c4d0" />
<path d="M995.2,456.6 h2.4 l1.5,1.5 v2.4 l-1.5,1.5 h-2.4 l-1.5,-1.5 v-2.4 z" fill="#d8c800"/>
<circle cx="996.4" cy="459.3" r="1.5" fill="#c4c4d0" />
<path d="M1032.4,456.6 h2.4 l1.5,1.5 v2.4 l-1.5,1.5 h-2.4 l-1.5,-1.5 v-2.4 z" fill="#d8c800"/>
<circle cx="1033.6" cy="459.3" r="1.5" fill="#c4c4d0" />
<path d="M1068.5,456.6 h2.4 l1.5,1.5 v2.4 l-1.5,1.5 h-2.4 l-1.5,-1.5 v-2.4 z" fill="#d8c800"/>
<circle cx="1069.7" cy="459.3" r="1.5" fill="#c4c4d0" />
<path d="M1105.5,456.6 h2.4 l1.5,1.5 v2.4 l-1.5,1.5 h-2.4 l-1.5,-1.5 v-2.4 z" fill="#d8c800"/>
<circle cx="1106.7" cy="459.3" r="1.5" fill="#c4c4d0" />
<path d="M1140.5,456.6 h2.4 l1.5,1.5 v2.4 l-1.5,1.5 h-2.4 l-1.5,-1.5 v-2.4 z" fill="#d8c800"/>
<circle cx="1141.7" cy="459.3" r="1.5" fill="#c4c4d0" />
<path d="M743.2,469.7 h2.4 l1.5,1.5 v2.4 l-1.5,1.5 h-2.4 l-1.5,-1.5 v-2.4 z" fill="#d8c800"/>
<circle cx="744.4" cy="472.4" r="1.5" fill="#c4c4d0" />
<path d="M743.2,501.3 h2.4 l1.5,1.5 v2.4 l-1.5,1.5 h-2.4 l-1.5,-1.5 v-2.4 z" fill="#d8c800"/>
<circle cx="744.4" cy="504" r="1.5" fill="#c4c4d0" />
<path d="M743.2,532.3 h2.4 l1.5,1.5 v2.4 l-1.5,1.5 h-2.4 l-1.5,-1.5 v-2.4 z" fill="#d8c800"/>
<circle cx="744.4" cy="535" r="1.5" fill="#c4c4d0" />
<path d="M743.2,564.7 h2.4 l1.5,1.5 v2.4 l-1.5,1.5 h-2.4 l-1.5,-1.5 v-2.4 z" fill="#d8c800"/>
<circle cx="744.4" cy="567.4" r="1.5" fill="#c4c4d0" />
<path d="M743.2,595.7 h2.4 l1.5,1.5 v2.4 l-1.5,1.5 h-2.4 l-1.5,-1.5 v-2.4 z" fill="#d8c800"/>
<circle cx="744.4" cy="598.4" r="1.5" fill="#c4c4d0" />
<path d="M743.2,627.8 h2.4 l1.5,1.5 v2.4 l-1.5,1.5 h-2.4 l-1.5,-1.5 v-2.4 z" fill="#d8c800"/>
<circle cx="744.4" cy="630.5" r="1.5" fill="#c4c4d0" />
<path d="M743.2,659.4 h2.4 l1.5,1.5 v2.4 l-1.5,1.5 h-2.4 l-1.5,-1.5 v-2.4 z" fill="#d8c800"/>
<circle cx="744.4" cy="662.1" r="1.5" fill="#c4c4d0" />
<path d="M743.2,690.8 h2.4 l1.5,1.5 v2.4 l-1.5,1.5 h-2.4 l-1.5,-1.5 v-2.4 z" fill="#d8c800"/>
<circle cx="744.4" cy="693.5" r="1.5" fill="#c4c4d0" />
<path d="M743.2,722.3 h2.4 l1.5,1.5 v2.4 l-1.5,1.5 h-2.4 l-1.5,-1.5 v-2.4 z" fill="#d8c800"/>
<circle cx="744.4" cy="725" r="1.5" fill="#c4c4d0" />
<path d="M743.2,754.3 h2.4 l1.5,1.5 v2.4 l-1.5,1.5 h-2.4 l-1.5,-1.5 v-2.4 z" fill="#d8c800"/>
<circle cx="744.4" cy="757" r="1.5" fill="#c4c4d0" />
<path d="M743.2,785.8 h2.4 l1.5,1.5 v2.4 l-1.5,1.5 h-2.4 l-1.5,-1.5 v-2.4 z" fill="#d8c800"/>
<circle cx="744.4" cy="788.5" r="1.5" fill="#c4c4d0" />
<path d="M743.4,806.8 h2.4 l1.5,1.5 v2.4 l-1.5,1.5 h-2.4 l-1.5,-1.5 v-2.4 z" fill="#d8c800"/>
<circle cx="744.6" cy="809.5" r="1.5" fill="#c4c4d0" />
<path d="M774.2,806.8 h2.4 l1.5,1.5 v2.4 l-1.5,1.5 h-2.4 l-1.5,-1.5 v-2.4 z" fill="#d8c800"/>
<circle cx="775.4" cy="809.5" r="1.5" fill="#c4c4d0" />
<path d="M808.3,806.8 h2.4 l1.5,1.5 v2.4 l-1.5,1.5 h-2.4 l-1.5,-1.5 v-2.4 z" fill="#d8c800"/>
<circle cx="809.5" cy="809.5" r="1.5" fill="#c4c4d0" />
<path d="M841.4,806.8 h2.4 l1.5,1.5 v2.4 l-1.5,1.5 h-2.4 l-1.5,-1.5 v-2.4 z" fill="#d8c800"/>
<circle cx="842.6" cy="809.5" r="1.5" fill="#c4c4d0" />
<path d="M874.6,806.8 h2.4 l1.5,1.5 v2.4 l-1.5,1.5 h-2.4 l-1.5,-1.5 v-2.4 z" fill="#d8c800"/>
<circle cx="875.8" cy="809.5" r="1.5" fill="#c4c4d0" />
<path d="M908.2,806.8 h2.4 l1.5,1.5 v2.4 l-1.5,1.5 h-2.4 l-1.5,-1.5 v-2.4 z" fill="#d8c800"/>
<circle cx="909.4" cy="809.5" r="1.5" fill="#c4c4d0" />
<path d="M941.2,806.8 h2.4 l1.5,1.5 v2.4 l-1.5,1.5 h-2.4 l-1.5,-1.5 v-2.4 z" fill="#d8c800"/>
<circle cx="942.4" cy="809.5" r="1.5" fill="#c4c4d0" />
<path d="M1025.4,806.7 h2.4 l1.5,1.5 v2.4 l-1.5,1.5 h-2.4 l-1.5,-1.5 v-2.4 z" fill="#d8c800"/>
<circle cx="1026.6" cy="809.4" r="1.5" fill="#c4c4d0" />
<path d="M1058.3,806.7 h2.4 l1.5,1.5 v2.4 l-1.5,1.5 h-2.4 l-1.5,-1.5 v-2.4 z" fill="#d8c800"/>
<circle cx="1059.5" cy="809.4" r="1.5" fill="#c4c4d0" />
<path d="M1091.6,806.7 h2.4 l1.5,1.5 v2.4 l-1.5,1.5 h-2.4 l-1.5,-1.5 v-2.4 z" fill="#d8c800"/>
<circle cx="1092.8" cy="809.4" r="1.5" fill="#c4c4d0" />
<path d="M1124.8,806.7 h2.4 l1.5,1.5 v2.4 l-1.5,1.5 h-2.4 l-1.5,-1.5 v-2.4 z" fill="#d8c800"/>
<circle cx="1126" cy="809.4" r="1.5" fill="#c4c4d0" />
<path d="M1156.2,806.7 h2.4 l1.5,1.5 v2.4 l-1.5,1.5 h-2.4 l-1.5,-1.5 v-2.4 z" fill="#d8c800"/>
<circle cx="1157.4" cy="809.4" r="1.5" fill="#c4c4d0" />
<path d="M1155.8,471.1 h2.4 l1.5,1.5 v2.4 l-1.5,1.5 h-2.4 l-1.5,-1.5 v-2.4 z" fill="#d8c800"/>
<circle cx="1157" cy="473.8" r="1.5" fill="#c4c4d0" />
<path d="M1155.8,500.9 h2.4 l1.5,1.5 v2.4 l-1.5,1.5 h-2.4 l-1.5,-1.5 v-2.4 z" fill="#d8c800"/>
<circle cx="1157" cy="503.6" r="1.5" fill="#c4c4d0" />
<path d="M1155.8,530.8 h2.4 l1.5,1.5 v2.4 l-1.5,1.5 h-2.4 l-1.5,-1.5 v-2.4 z" fill="#d8c800"/>
<circle cx="1157" cy="533.5" r="1.5" fill="#c4c4d0" />
<path d="M1155.8,560.7 h2.4 l1.5,1.5 v2.4 l-1.5,1.5 h-2.4 l-1.5,-1.5 v-2.4 z" fill="#d8c800"/>
<circle cx="1157" cy="563.4" r="1.5" fill="#c4c4d0" />
<path d="M1155.8,590.8 h2.4 l1.5,1.5 v2.4 l-1.5,1.5 h-2.4 l-1.5,-1.5 v-2.4 z" fill="#d8c800"/>
<circle cx="1157" cy="593.5" r="1.5" fill="#c4c4d0" />
<path d="M1155.8,620.6 h2.4 l1.5,1.5 v2.4 l-1.5,1.5 h-2.4 l-1.5,-1.5 v-2.4 z" fill="#d8c800"/>
<circle cx="1157" cy="623.3" r="1.5" fill="#c4c4d0" />
<path d="M1155.8,650.8 h2.4 l1.5,1.5 v2.4 l-1.5,1.5 h-2.4 l-1.5,-1.5 v-2.4 z" fill="#d8c800"/>
<circle cx="1157" cy="653.5" r="1.5" fill="#c4c4d0" />
<path d="M1156.2,680.3 h2.4 l1.5,1.5 v2.4 l-1.5,1.5 h-2.4 l-1.5,-1.5 v-2.4 z" fill="#d8c800"/>
<circle cx="1157.4" cy="683" r="1.5" fill="#c4c4d0" />
<path d="M1156.2,710.1 h2.4 l1.5,1.5 v2.4 l-1.5,1.5 h-2.4 l-1.5,-1.5 v-2.4 z" fill="#d8c800"/>
<circle cx="1157.4" cy="712.8" r="1.5" fill="#c4c4d0" />
<path d="M1156.2,739.6 h2.4 l1.5,1.5 v2.4 l-1.5,1.5 h-2.4 l-1.5,-1.5 v-2.4 z" fill="#d8c800"/>
<circle cx="1157.4" cy="742.3" r="1.5" fill="#c4c4d0" />
<path d="M1156.2,769.6 h2.4 l1.5,1.5 v2.4 l-1.5,1.5 h-2.4 l-1.5,-1.5 v-2.4 z" fill="#d8c800"/>
<circle cx="1157.4" cy="772.3" r="1.5" fill="#c4c4d0" />
<path d="M767.2,502.7 h2.4 l1.5,1.5 v2.4 l-1.5,1.5 h-2.4 l-1.5,-1.5 v-2.4 z" fill="#d8c800"/>
<circle cx="768.4" cy="505.4" r="1.5" fill="#c4c4d0" />
<path d="M800.2,502.7 h2.4 l1.5,1.5 v2.4 l-1.5,1.5 h-2.4 l-1.5,-1.5 v-2.4 z" fill="#d8c800"/>
<circle cx="801.4" cy="505.4" r="1.5" fill="#c4c4d0" />
<path d="M767.2,516.9 h2.4 l1.5,1.5 v2.4 l-1.5,1.5 h-2.4 l-1.5,-1.5 v-2.4 z" fill="#d8c800"/>
<circle cx="768.4" cy="519.6" r="1.5" fill="#c4c4d0" />
<path d="M800.2,516.9 h2.4 l1.5,1.5 v2.4 l-1.5,1.5 h-2.4 l-1.5,-1.5 v-2.4 z" fill="#d8c800"/>
<circle cx="801.4" cy="519.6" r="1.5" fill="#c4c4d0" />
<path d="M800.2,532.7 h2.4 l1.5,1.5 v2.4 l-1.5,1.5 h-2.4 l-1.5,-1.5 v-2.4 z" fill="#d8c800"/>
<circle cx="801.4" cy="535.4" r="1.5" fill="#c4c4d0" />
<path d="M883.2,499.7 h2.4 l1.5,1.5 v2.4 l-1.5,1.5 h-2.4 l-1.5,-1.5 v-2.4 z" fill="#d8c800"/>
<circle cx="884.4" cy="502.4" r="1.5" fill="#c4c4d0" />
<path d="M869.1,508.7 h2.4 l1.5,1.5 v2.4 l-1.5,1.5 h-2.4 l-1.5,-1.5 v-2.4 z" fill="#d8c800"/>
<circle cx="870.3" cy="511.4" r="1.5" fill="#c4c4d0" />
<path d="M884,521.4 h2.4 l1.5,1.5 v2.4 l-1.5,1.5 h-2.4 l-1.5,-1.5 v-2.4 z" fill="#d8c800"/>
<circle cx="885.2" cy="524.1" r="1.5" fill="#c4c4d0" />
<path d="M850.4,535.5 h2.4 l1.5,1.5 v2.4 l-1.5,1.5 h-2.4 l-1.5,-1.5 v-2.4 z" fill="#d8c800"/>
<circle cx="851.6" cy="538.2" r="1.5" fill="#c4c4d0" />
<path d="M994.2,498.7 h2.4 l1.5,1.5 v2.4 l-1.5,1.5 h-2.4 l-1.5,-1.5 v-2.4 z" fill="#d8c800"/>
<circle cx="995.4" cy="501.4" r="1.5" fill="#c4c4d0" />
<path d="M994.2,521.4 h2.4 l1.5,1.5 v2.4 l-1.5,1.5 h-2.4 l-1.5,-1.5 v-2.4 z" fill="#d8c800"/>
<circle cx="995.4" cy="524.1" r="1.5" fill="#c4c4d0" />
<path d="M1026.5,498.7 h2.4 l1.5,1.5 v2.4 l-1.5,1.5 h-2.4 l-1.5,-1.5 v-2.4 z" fill="#d8c800"/>
<circle cx="1027.7" cy="501.4" r="1.5" fill="#c4c4d0" />
<path d="M1026.5,509.6 h2.4 l1.5,1.5 v2.4 l-1.5,1.5 h-2.4 l-1.5,-1.5 v-2.4 z" fill="#d8c800"/>
<circle cx="1027.7" cy="512.3" r="1.5" fill="#c4c4d0" />
<path d="M1026.5,521.4 h2.4 l1.5,1.5 v2.4 l-1.5,1.5 h-2.4 l-1.5,-1.5 v-2.4 z" fill="#d8c800"/>
<circle cx="1027.7" cy="524.1" r="1.5" fill="#c4c4d0" />
<path d="M1061.5,519.6 h2.4 l1.5,1.5 v2.4 l-1.5,1.5 h-2.4 l-1.5,-1.5 v-2.4 z" fill="#d8c800"/>
<circle cx="1062.7" cy="522.3" r="1.5" fill="#c4c4d0" />
<path d="M1061.8,519.6 h2.4 l1.5,1.5 v2.4 l-1.5,1.5 h-2.4 l-1.5,-1.5 v-2.4 z" fill="#d8c800"/>
<circle cx="1063" cy="522.3" r="1.5" fill="#c4c4d0" />
<path d="M786.2,595.7 h2.4 l1.5,1.5 v2.4 l-1.5,1.5 h-2.4 l-1.5,-1.5 v-2.4 z" fill="#d8c800"/>
<circle cx="787.4" cy="598.4" r="1.5" fill="#c4c4d0" />
<path d="M848.2,593 h2.4 l1.5,1.5 v2.4 l-1.5,1.5 h-2.4 l-1.5,-1.5 v-2.4 z" fill="#d8c800"/>
<circle cx="849.4" cy="595.7" r="1.5" fill="#c4c4d0" />
<path d="M863.2,593 h2.4 l1.5,1.5 v2.4 l-1.5,1.5 h-2.4 l-1.5,-1.5 v-2.4 z" fill="#d8c800"/>
<circle cx="864.4" cy="595.7" r="1.5" fill="#c4c4d0" />
<path d="M886.3,592.6 h2.4 l1.5,1.5 v2.4 l-1.5,1.5 h-2.4 l-1.5,-1.5 v-2.4 z" fill="#d8c800"/>
<circle cx="887.5" cy="595.3" r="1.5" fill="#c4c4d0" />
<path d="M901.2,592.6 h2.4 l1.5,1.5 v2.4 l-1.5,1.5 h-2.4 l-1.5,-1.5 v-2.4 z" fill="#d8c800"/>
<circle cx="902.4" cy="595.3" r="1.5" fill="#c4c4d0" />
<path d="M872.2,580.6 h2.4 l1.5,1.5 v2.4 l-1.5,1.5 h-2.4 l-1.5,-1.5 v-2.4 z" fill="#d8c800"/>
<circle cx="873.4" cy="583.3" r="1.5" fill="#c4c4d0" />
<path d="M872.2,605.5 h2.4 l1.5,1.5 v2.4 l-1.5,1.5 h-2.4 l-1.5,-1.5 v-2.4 z" fill="#d8c800"/>
<circle cx="873.4" cy="608.2" r="1.5" fill="#c4c4d0" />
<path d="M929.3,556.4 h2.4 l1.5,1.5 v2.4 l-1.5,1.5 h-2.4 l-1.5,-1.5 v-2.4 z" fill="#d8c800"/>
<circle cx="930.5" cy="559.1" r="1.5" fill="#c4c4d0" />
<path d="M786.3,651.5 h2.4 l1.5,1.5 v2.4 l-1.5,1.5 h-2.4 l-1.5,-1.5 v-2.4 z" fill="#d8c800"/>
<circle cx="787.5" cy="654.2" r="1.5" fill="#c4c4d0" />
<path d="M801.8,651.5 h2.4 l1.5,1.5 v2.4 l-1.5,1.5 h-2.4 l-1.5,-1.5 v-2.4 z" fill="#d8c800"/>
<circle cx="803" cy="654.2" r="1.5" fill="#c4c4d0" />
<path d="M762.1,674.3 h2.4 l1.5,1.5 v2.4 l-1.5,1.5 h-2.4 l-1.5,-1.5 v-2.4 z" fill="#d8c800"/>
<circle cx="763.3" cy="677" r="1.5" fill="#c4c4d0" />
<path d="M785.3,674.3 h2.4 l1.5,1.5 v2.4 l-1.5,1.5 h-2.4 l-1.5,-1.5 v-2.4 z" fill="#d8c800"/>
<circle cx="786.5" cy="677" r="1.5" fill="#c4c4d0" />
<path d="M801.3,674.3 h2.4 l1.5,1.5 v2.4 l-1.5,1.5 h-2.4 l-1.5,-1.5 v-2.4 z" fill="#d8c800"/>
<circle cx="802.5" cy="677" r="1.5" fill="#c4c4d0" />
<path d="M785.1,704.5 h2.4 l1.5,1.5 v2.4 l-1.5,1.5 h-2.4 l-1.5,-1.5 v-2.4 z" fill="#d8c800"/>
<circle cx="786.3" cy="707.2" r="1.5" fill="#c4c4d0" />
<path d="M801.4,704.5 h2.4 l1.5,1.5 v2.4 l-1.5,1.5 h-2.4 l-1.5,-1.5 v-2.4 z" fill="#d8c800"/>
<circle cx="802.6" cy="707.2" r="1.5" fill="#c4c4d0" />
<path d="M883.2,683.8 h2.4 l1.5,1.5 v2.4 l-1.5,1.5 h-2.4 l-1.5,-1.5 v-2.4 z" fill="#d8c800"/>
<circle cx="884.4" cy="686.5" r="1.5" fill="#c4c4d0" />
<path d="M905.6,683.8 h2.4 l1.5,1.5 v2.4 l-1.5,1.5 h-2.4 l-1.5,-1.5 v-2.4 z" fill="#d8c800"/>
<circle cx="906.8" cy="686.5" r="1.5" fill="#c4c4d0" />
<path d="M855.3,729.9 h2.4 l1.5,1.5 v2.4 l-1.5,1.5 h-2.4 l-1.5,-1.5 v-2.4 z" fill="#d8c800"/>
<circle cx="856.5" cy="732.6" r="1.5" fill="#c4c4d0" />
<path d="M903.6,719.8 h2.4 l1.5,1.5 v2.4 l-1.5,1.5 h-2.4 l-1.5,-1.5 v-2.4 z" fill="#d8c800"/>
<circle cx="904.8" cy="722.5" r="1.5" fill="#c4c4d0" />
<path d="M917.3,733.9 h2.4 l1.5,1.5 v2.4 l-1.5,1.5 h-2.4 l-1.5,-1.5 v-2.4 z" fill="#d8c800"/>
<circle cx="918.5" cy="736.6" r="1.5" fill="#c4c4d0" />
<path d="M931.4,733.9 h2.4 l1.5,1.5 v2.4 l-1.5,1.5 h-2.4 l-1.5,-1.5 v-2.4 z" fill="#d8c800"/>
<circle cx="932.6" cy="736.6" r="1.5" fill="#c4c4d0" />
<path d="M944.1,733.9 h2.4 l1.5,1.5 v2.4 l-1.5,1.5 h-2.4 l-1.5,-1.5 v-2.4 z" fill="#d8c800"/>
<circle cx="945.3" cy="736.6" r="1.5" fill="#c4c4d0" />
<path d="M978.2,733.9 h2.4 l1.5,1.5 v2.4 l-1.5,1.5 h-2.4 l-1.5,-1.5 v-2.4 z" fill="#d8c800"/>
<circle cx="979.4" cy="736.6" r="1.5" fill="#c4c4d0" />
<path d="M903.6,746.8 h2.4 l1.5,1.5 v2.4 l-1.5,1.5 h-2.4 l-1.5,-1.5 v-2.4 z" fill="#d8c800"/>
<circle cx="904.8" cy="749.5" r="1.5" fill="#c4c4d0" />
<path d="M989.3,713.6 h2.4 l1.5,1.5 v2.4 l-1.5,1.5 h-2.4 l-1.5,-1.5 v-2.4 z" fill="#d8c800"/>
<circle cx="990.5" cy="716.3" r="1.5" fill="#c4c4d0" />
<path d="M1006,682.6 h2.4 l1.5,1.5 v2.4 l-1.5,1.5 h-2.4 l-1.5,-1.5 v-2.4 z" fill="#d8c800"/>
<circle cx="1007.2" cy="685.3" r="1.5" fill="#c4c4d0" />
<path d="M816,729.7 h2.4 l1.5,1.5 v2.4 l-1.5,1.5 h-2.4 l-1.5,-1.5 v-2.4 z" fill="#d8c800"/>
<circle cx="817.2" cy="732.4" r="1.5" fill="#c4c4d0" />
<path d="M830.3,729.7 h2.4 l1.5,1.5 v2.4 l-1.5,1.5 h-2.4 l-1.5,-1.5 v-2.4 z" fill="#d8c800"/>
<circle cx="831.5" cy="732.4" r="1.5" fill="#c4c4d0" />
<path d="M842.2,729.7 h2.4 l1.5,1.5 v2.4 l-1.5,1.5 h-2.4 l-1.5,-1.5 v-2.4 z" fill="#d8c800"/>
<circle cx="843.4" cy="732.4" r="1.5" fill="#c4c4d0" />
<path d="M855.3,729.7 h2.4 l1.5,1.5 v2.4 l-1.5,1.5 h-2.4 l-1.5,-1.5 v-2.4 z" fill="#d8c800"/>
<circle cx="856.5" cy="732.4" r="1.5" fill="#c4c4d0" />
<path d="M1018.6,758.7 h2.4 l1.5,1.5 v2.4 l-1.5,1.5 h-2.4 l-1.5,-1.5 v-2.4 z" fill="#d8c800"/>
<circle cx="1019.8" cy="761.4" r="1.5" fill="#c4c4d0" />
<path d="M1041.2,792.7 h2.4 l1.5,1.5 v2.4 l-1.5,1.5 h-2.4 l-1.5,-1.5 v-2.4 z" fill="#d8c800"/>
<circle cx="1042.4" cy="795.4" r="1.5" fill="#c4c4d0" />
<path d="M1058.3,792.7 h2.4 l1.5,1.5 v2.4 l-1.5,1.5 h-2.4 l-1.5,-1.5 v-2.4 z" fill="#d8c800"/>
<circle cx="1059.5" cy="795.4" r="1.5" fill="#c4c4d0" />
<path d="M1043.2,609.2 h2.4 l1.5,1.5 v2.4 l-1.5,1.5 h-2.4 l-1.5,-1.5 v-2.4 z" fill="#d8c800"/>
<circle cx="1044.4" cy="611.9" r="1.5" fill="#c4c4d0" />
<rect x="1" y="394" width="1900" height="1" fill="#ffffff" shape-rendering="crispEdges"/>
<rect x="1057" y="98" width="1" height="881" fill="#ffffff" shape-rendering="crispEdges"/>
<rect x="741" y="394" width="422" height="1" fill="#ff88ff" shape-rendering="crispEdges"/>
<rect x="1057" y="377" width="1" height="440" fill="#ff88ff" shape-rendering="crispEdges"/>
<rect x="732" y="144" width="1" height="835" fill="#ffffff" shape-rendering="crispEdges"/>
<rect x="732" y="144" width="440" height="1" fill="#ffffff" shape-rendering="crispEdges"/>
<rect x="1171" y="144" width="1" height="835" fill="#ffffff" shape-rendering="crispEdges"/>
<rect x="732" y="99" width="1" height="40" fill="#ffff00" shape-rendering="crispEdges"/>
<rect x="1171" y="99" width="1" height="41" fill="#ffff00" shape-rendering="crispEdges"/>
<rect x="623" y="144" width="99" height="1" fill="#ffff00" shape-rendering="crispEdges"/>
<rect x="633" y="144" width="1" height="424" fill="#ffff00" shape-rendering="crispEdges"/>
<rect x="633" y="599" width="1" height="380" fill="#ffff00" shape-rendering="crispEdges"/>
<path d="M627.5,166.5 L639.5,166.5 L633.5,145.5 Z" fill="none" stroke="#ffff00" stroke-width="1.2" />
<line x1="690" y1="99" x2="747" y2="154" stroke="#ffff00" stroke-width="1.2"/>
<path d="M733.2,149.7 L740.4,141 L747.5,154.1 Z" fill="none" stroke="#ffff00" stroke-width="1.2" />
<circle cx="751.7" cy="160.7" r="9" fill="#000080" />
<rect x="747" y="168" width="10" height="1" fill="#ffff80" shape-rendering="crispEdges"/>
<rect x="785" y="168" width="15" height="1" fill="#ff80ff" shape-rendering="crispEdges"/>
<rect x="1117" y="168" width="13" height="1" fill="#ff80ff" shape-rendering="crispEdges"/>
<text transform="translate(591.5,592) scale(0.7,1)" x="0 12.8571 30.4286 44.2857 52.8571 70 92.8571" y="0" font-size="22.2" fill="#ffff00" stroke="#ffff00" stroke-width="0.5">100.0mm</text>
<text transform="translate(1258.5,928) scale(0.7,1)" x="0 14.2857 24.2857 41.4286 64.2857" y="0" font-size="22.2" fill="#ffff00" stroke="#ffff00" stroke-width="0.5">2.0mm</text>
<path d="M1253.7,919.5 L1237.2,919.5 L1178,979" fill="none" stroke="#ffff00" stroke-width="1.2" />
<circle cx="7" cy="103" r="2.5" fill="#00ff00" />
<path d="M921,499.5 L947,499.5 L956,509 L985,509 M932,507.5 L944,507.5 L954,518 L996,518 L1001,514" fill="none" stroke="#1f5fae" stroke-width="2" />
<circle cx="917.3" cy="500.5" r="3.8" fill="none" stroke="#f0a030" stroke-width="2"/>
<circle cx="927.2" cy="508.3" r="3.8" fill="none" stroke="#f0a030" stroke-width="2"/>
<circle cx="986.3" cy="510.5" r="3.8" fill="none" stroke="#f0a030" stroke-width="2"/>
<circle cx="1002.4" cy="510.5" r="3.8" fill="none" stroke="#f0a030" stroke-width="2"/>
<text x="909.5" y="550" font-size="30.5" fill="#1f5fae" stroke="#1f5fae" stroke-width="0.45" textLength="108" lengthAdjust="spacingAndGlyphs">EDA365</text></g></svg>
<div class="abs" style="left:0;top:97px;width:2px;height:900px;background:#a4a4a4"></div>
<div id="vscroll"></div>
<div id="hscroll"></div>
<div class="abs" style="left:1901px;top:99px;width:18px;height:880px;background:#ececec;border-left:1px solid #e0e0e0"></div>
<svg class="abs" style="left:1904px;top:108px" width="10" height="6"><path d="M1,5 L5,1 L9,5Z" fill="#404040"/></svg>
<svg class="abs" style="left:1904px;top:968px" width="10" height="6"><path d="M1,1 L9,1 L5,5Z" fill="#404040"/></svg>
<div class="abs" style="left:1902px;top:749px;width:16px;height:56px;border:1px solid #9a9a9a;border-radius:2px;background:linear-gradient(90deg,#f4f4f4,#e2e2e2 50%,#d4d4d4 52%,#e0e0e0)"></div>
<div class="abs" style="left:1906px;top:773px;width:7px;height:7px;background:repeating-linear-gradient(#555 0 1px,transparent 1px 2px)"></div>
<svg class="abs" style="left:6px;top:982px" width="8" height="10"><path d="M6,1 L6,9 L2,5Z" fill="#404040"/></svg>
<svg class="abs" style="left:1889px;top:982px" width="8" height="10"><path d="M2,1 L2,9 L6,5Z" fill="#404040"/></svg>
<div class="abs" style="left:244px;top:981px;width:281px;height:15px;border:1px solid #9a9a9a;border-radius:2px;background:linear-gradient(#f4f4f4,#e2e2e2 50%,#d4d4d4 52%,#e0e0e0)"></div>
<div class="abs" style="left:380px;top:985px;width:7px;height:7px;background:repeating-linear-gradient(90deg,#555 0 1px,transparent 1px 2px)"></div>
<div class="abs" style="left:1901px;top:979px;width:19px;height:18px;background:#ececec"></div>
<div id="outbar"></div>
<div class="abs" style="left:5px;top:1000px;width:131px;height:20px;background:linear-gradient(#f9c77a,#fbdcae 60%,#fde6c6);border-left:1px solid #d9e6f5"></div>
<div class="abs" style="left:9px;top:1004px;width:11px;height:11px;border-radius:50%;background:#8fd07a;border:1px solid #3d8a3a"></div>
<div class="abs" style="left:38px;top:1003px;font-size:12px;color:#6a6a6a">Output Window</div>
<div id="status"><span style="left:4px;top:3px;font-size:11px">Ready</span><span style="left:1586px">W:0.1</span><span style="left:1651px">G:0.1 0.1</span><span style="left:1761px">37</span><span style="left:1811px">71.5</span><span style="left:1863px">millimeters</span></div>
<div class="abs" style="left:1516px;top:1022px;width:1px;height:16px;background:#c8c4c4"></div>
<div class="abs" style="left:1581px;top:1022px;width:1px;height:16px;background:#c8c4c4"></div>
<div class="abs" style="left:1646px;top:1022px;width:1px;height:16px;background:#c8c4c4"></div>
<div class="abs" style="left:1756px;top:1022px;width:1px;height:16px;background:#c8c4c4"></div>
<div class="abs" style="left:1807px;top:1022px;width:1px;height:16px;background:#c8c4c4"></div>
<div class="abs" style="left:1858px;top:1022px;width:1px;height:16px;background:#c8c4c4"></div>
<svg class="abs" style="left:1777px;top:995px;opacity:0.62" width="30" height="28" viewBox="0 0 27 26"><g fill="#b8506e"><rect x="3" y="0" width="19" height="4"/><rect x="3" y="0" width="4" height="13"/><rect x="18" y="0" width="4" height="13"/><rect x="3" y="5.5" width="19" height="3"/><rect x="3" y="10" width="19" height="3"/><rect x="1" y="14.5" width="25" height="3.5"/><rect x="21" y="14.5" width="4" height="11"/><rect x="16" y="23" width="9" height="3"/><path d="M8,14 L3,24 L7,25 L12,15Z"/><path d="M15,18 L10,25 L14,26 L19,18Z"/></g></svg>
<svg class="abs" style="left:1807px;top:995px;opacity:0.62" width="30" height="28" viewBox="0 0 27 26"><g fill="#b8506e"><rect x="0" y="0" width="5" height="5"/><rect x="0" y="9" width="6" height="3"/><rect x="2" y="9" width="4" height="13"/><path d="M2,21 L0,25 L27,25 L27,22 L6,22Z"/><rect x="9" y="3" width="18" height="4"/><rect x="9" y="3" width="4" height="18"/><rect x="23" y="3" width="4" height="18"/><rect x="9" y="10" width="18" height="3.5"/><rect x="9" y="17" width="18" height="3.5"/><rect x="16" y="0" width="4" height="20"/></g></svg>
<svg class="abs" style="left:1837px;top:995px;opacity:0.62" width="30" height="28" viewBox="0 0 27 26"><g fill="#b8506e"><rect x="0" y="7" width="11" height="3.5"/><rect x="4" y="0" width="4" height="23"/><path d="M2,24 L8,20 L8,23 L3,26Z"/><rect x="11" y="1" width="16" height="4"/><path d="M16,4 L11,18 L14,19 L20,5Z"/><rect x="14" y="12" width="12" height="3.5"/><rect x="14" y="12" width="4" height="14"/><rect x="22" y="12" width="4" height="14"/><rect x="14" y="22" width="12" height="4"/></g></svg>
<svg class="abs" style="left:1868px;top:995px;opacity:0.62" width="30" height="28" viewBox="0 0 27 26"><g fill="#3f7fc8"><rect x="0" y="8" width="10" height="3.5"/><rect x="3" y="1" width="4" height="21"/><path d="M0,22 L10,17 L11,20 L1,25Z"/><rect x="17" y="0" width="4" height="4"/><rect x="11" y="4" width="16" height="3.5"/><rect x="13" y="8" width="3" height="4"/><rect x="22" y="8" width="3" height="4"/><rect x="11" y="11" width="16" height="3.5"/><rect x="13" y="16" width="13" height="3.5"/><rect x="13" y="16" width="4" height="10"/><rect x="22" y="16" width="4" height="10"/><rect x="13" y="22.5" width="13" height="3.5"/></g></svg>
<svg class="abs" style="left:1897px;top:995px;opacity:0.62" width="30" height="28" viewBox="0 0 27 26"><g fill="#3f7fc8"><rect x="0" y="0" width="5" height="5"/><rect x="0" y="8" width="7" height="3.5"/><rect x="3" y="8" width="4" height="15"/><path d="M3,22 L8,17 L9,20 L4,25Z"/><rect x="11" y="2" width="4" height="18"/><path d="M11,19 L8,25 L11,26 L15,20Z"/><rect x="17" y="2" width="4" height="20"/><rect x="23" y="0" width="4" height="26"/></g></svg>
<svg class="abs" style="left:0;top:0;opacity:0.5" width="1930" height="1046"><g fill="#7a7a7a"><rect x="1776" y="1029" width="13" height="2" /><rect x="1778" y="1033" width="10" height="2"/><rect x="1781" y="1027" width="2" height="13"/><rect x="1776" y="1038" width="13" height="2"/><rect x="1793" y="1029" width="13" height="2" /><rect x="1795" y="1033" width="10" height="2"/><rect x="1798" y="1027" width="2" height="13"/><rect x="1793" y="1038" width="13" height="2"/><rect x="1810" y="1029" width="13" height="2" /><rect x="1812" y="1033" width="10" height="2"/><rect x="1815" y="1027" width="2" height="13"/><rect x="1810" y="1038" width="13" height="2"/><rect x="1827" y="1029" width="13" height="2" /><rect x="1829" y="1033" width="10" height="2"/><rect x="1832" y="1027" width="2" height="13"/><rect x="1827" y="1038" width="13" height="2"/><rect x="1844" y="1029" width="13" height="2" /><rect x="1846" y="1033" width="10" height="2"/><rect x="1849" y="1027" width="2" height="13"/><rect x="1844" y="1038" width="13" height="2"/><rect x="1861" y="1029" width="13" height="2" /><rect x="1863" y="1033" width="10" height="2"/><rect x="1866" y="1027" width="2" height="13"/><rect x="1861" y="1038" width="13" height="2"/><rect x="1878" y="1029" width="13" height="2" /><rect x="1880" y="1033" width="10" height="2"/><rect x="1883" y="1027" width="2" height="13"/><rect x="1878" y="1038" width="13" height="2"/><rect x="1895" y="1029" width="13" height="2" /><rect x="1897" y="1033" width="10" height="2"/><rect x="1900" y="1027" width="2" height="13"/><rect x="1895" y="1038" width="13" height="2"/><rect x="1912" y="1029" width="13" height="2" /><rect x="1914" y="1033" width="10" height="2"/><rect x="1917" y="1027" width="2" height="13"/><rect x="1912" y="1038" width="13" height="2"/></g></svg>
</div>
<div id="taskbar"></div>
<div class="abs" style="left:1920px;top:0;width:10px;height:1046px;background:#0d1420"></div>
<div class="abs" style="left:12px;top:1040px;width:29px;height:10px;border-radius:50% 50% 0 0;background:linear-gradient(#cfe0f0,#6f90b8);"></div>
<div class="abs" style="left:72px;top:1041px;width:14px;height:6px;background:#8fc040;border-radius:3px 3px 0 0"></div>
<div class="abs" style="left:88px;top:1041px;width:12px;height:6px;background:#e87830;border-radius:3px 3px 0 0"></div>
<div class="abs" style="left:135px;top:1041px;width:15px;height:6px;background:#e8eef4;border-radius:3px 3px 0 0"></div>
<div class="abs" style="left:195px;top:1041px;width:32px;height:6px;background:#60b850;border-radius:3px 3px 0 0"></div>
<div class="abs" style="left:244px;top:1040px;width:158px;height:6px;background:linear-gradient(#d8d8d8,#a8a8a8);border-radius:2px 2px 0 0;border:1px solid #444;border-bottom:none"></div>
<div class="abs" style="left:468px;top:1040px;width:157px;height:6px;background:linear-gradient(#d8d8d8,#a8a8a8);border-radius:2px 2px 0 0;border:1px solid #444;border-bottom:none"></div>
<div class="abs" style="left:692px;top:1040px;width:158px;height:6px;background:linear-gradient(#f4eeb0,#e0d890);border-radius:2px 2px 0 0;border:1px solid #444;border-bottom:none"></div>
<div class="abs" style="left:418px;top:1041px;width:32px;height:5px;border:1px solid #d08030;border-bottom:none;background:#2a2a2a"></div>
<div class="abs" style="left:643px;top:1041px;width:32px;height:5px;border:1px solid #d08030;border-bottom:none;background:#2a2a2a"></div></body></html>
